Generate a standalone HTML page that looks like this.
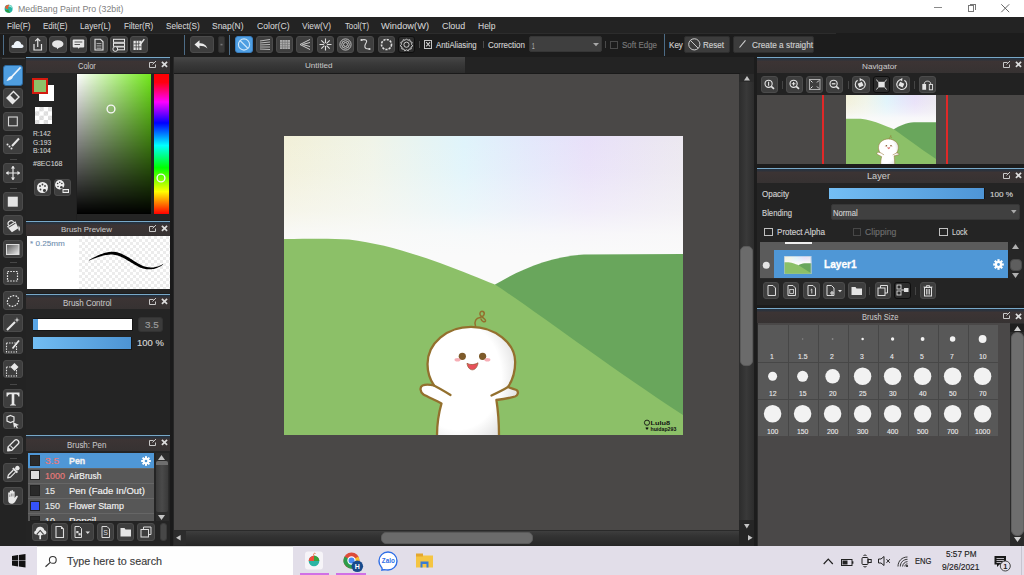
<!DOCTYPE html><html><head><meta charset="utf-8"><style>
*{margin:0;padding:0;box-sizing:border-box}
html,body{width:1024px;height:575px;overflow:hidden;background:#222;font-family:"Liberation Sans",sans-serif}
.a{position:absolute}
.t{position:absolute;white-space:nowrap;line-height:1}
svg{overflow:visible}
text{font-family:"Liberation Sans",sans-serif;white-space:pre}
</style></head><body><div class="a" style="left:0px;top:0px;width:1024px;height:17px;background:#fff"></div>
<svg class="a" style="left:3.5px;top:3.5px;" width="9" height="9" viewBox="0 0 9 9"><circle cx="4.6" cy="4.8" r="4" fill="#26b5a6"/><path d="M1 3.5 C1.5 1.2,3.5 0.5,5.5 0.9 C4.5 2,4 3.5,4.3 5 C3 5.2,1.8 4.8,1 3.5Z" fill="#e0603a"/><path d="M0.8 5.5 C1.5 6,3 6.2,4.3 5.5 C4.8 7,5.5 8,6.5 8.6 C4.5 9.3,1.8 8.2,0.8 5.5Z" fill="#2e9a40"/><path d="M5.5 0.9 C7.5 1.3,8.6 3,8.6 4.8 C7.5 3.2,6 2.3,4.4 2.8Z" fill="#9ee8d8"/></svg>
<svg class="a" style="left:13.50px;top:-0.32px;" width="113.5" height="16.9"><text x="4" y="12.32" font-size="9.40" fill="#808080" stroke="#808080" stroke-width="0" textLength="105.49" lengthAdjust="spacingAndGlyphs">MediBang Paint Pro (32bit)</text></svg>
<div class="a" style="left:933.5px;top:7px;width:8.5px;height:1px;background:#8a8a8a"></div>
<div class="a" style="left:967.5px;top:5px;width:6.5px;height:6.5px;border:1px solid #777"></div>
<div class="a" style="left:969.5px;top:3.5px;width:6px;height:6px;border-top:1px solid #777;border-right:1px solid #777"></div>
<svg class="a" style="left:1001px;top:3.5px;" width="8.5" height="8.5" viewBox="0 0 8.5 8.5"><path d="M0.3 0.3 L8.2 8.2 M8.2 0.3 L0.3 8.2" stroke="#666" stroke-width="1"/></svg>
<div class="a" style="left:0px;top:17px;width:1024px;height:16px;background:#232323"></div>
<svg class="a" style="left:2.50px;top:16.19px;" width="31.5" height="17.9"><text x="4" y="12.81" font-size="9.93" fill="#d4d4d4" stroke="#d4d4d4" stroke-width="0.08" textLength="23.51" lengthAdjust="spacingAndGlyphs">File(F)</text></svg>
<svg class="a" style="left:38.75px;top:16.19px;" width="32.5" height="17.9"><text x="4" y="12.81" font-size="9.93" fill="#d4d4d4" stroke="#d4d4d4" stroke-width="0.08" textLength="24.51" lengthAdjust="spacingAndGlyphs">Edit(E)</text></svg>
<svg class="a" style="left:75.75px;top:16.19px;" width="38.9" height="17.9"><text x="4" y="12.81" font-size="9.93" fill="#d4d4d4" stroke="#d4d4d4" stroke-width="0.08" textLength="30.86" lengthAdjust="spacingAndGlyphs">Layer(L)</text></svg>
<svg class="a" style="left:119.75px;top:16.19px;" width="37.3" height="17.9"><text x="4" y="12.81" font-size="9.93" fill="#d4d4d4" stroke="#d4d4d4" stroke-width="0.08" textLength="29.25" lengthAdjust="spacingAndGlyphs">Filter(R)</text></svg>
<svg class="a" style="left:161.50px;top:16.19px;" width="41.7" height="17.9"><text x="4" y="12.81" font-size="9.93" fill="#d4d4d4" stroke="#d4d4d4" stroke-width="0.08" textLength="33.75" lengthAdjust="spacingAndGlyphs">Select(S)</text></svg>
<svg class="a" style="left:207.50px;top:16.19px;" width="39.5" height="17.9"><text x="4" y="12.81" font-size="9.93" fill="#d4d4d4" stroke="#d4d4d4" stroke-width="0.08" textLength="31.51" lengthAdjust="spacingAndGlyphs">Snap(N)</text></svg>
<svg class="a" style="left:252.60px;top:16.19px;" width="40.5" height="17.9"><text x="4" y="12.81" font-size="9.93" fill="#d4d4d4" stroke="#d4d4d4" stroke-width="0.08" textLength="32.50" lengthAdjust="spacingAndGlyphs">Color(C)</text></svg>
<svg class="a" style="left:298.00px;top:16.19px;" width="37.0" height="17.9"><text x="4" y="12.81" font-size="9.93" fill="#d4d4d4" stroke="#d4d4d4" stroke-width="0.08" textLength="29.00" lengthAdjust="spacingAndGlyphs">View(V)</text></svg>
<svg class="a" style="left:341.00px;top:16.19px;" width="32.1" height="17.9"><text x="4" y="12.81" font-size="9.93" fill="#d4d4d4" stroke="#d4d4d4" stroke-width="0.08" textLength="24.09" lengthAdjust="spacingAndGlyphs">Tool(T)</text></svg>
<svg class="a" style="left:377.00px;top:16.19px;" width="56.0" height="17.9"><text x="4" y="12.81" font-size="9.93" fill="#d4d4d4" stroke="#d4d4d4" stroke-width="0.08" textLength="47.99" lengthAdjust="spacingAndGlyphs">Window(W)</text></svg>
<svg class="a" style="left:438.10px;top:16.19px;" width="31.2" height="17.9"><text x="4" y="12.81" font-size="9.93" fill="#d4d4d4" stroke="#d4d4d4" stroke-width="0.08" textLength="23.15" lengthAdjust="spacingAndGlyphs">Cloud</text></svg>
<svg class="a" style="left:474.40px;top:16.19px;" width="25.5" height="17.9"><text x="4" y="12.81" font-size="9.93" fill="#d4d4d4" stroke="#d4d4d4" stroke-width="0.08" textLength="17.49" lengthAdjust="spacingAndGlyphs">Help</text></svg>
<div class="a" style="left:0px;top:33px;width:1024px;height:24px;background:#1c1c1c"></div>
<div class="a" style="left:0px;top:33px;width:836px;height:1px;background:#2c2c2c"></div>
<div class="a" style="left:2.5px;top:35px;width:1px;height:20px;background:#4d6c86"></div>
<div class="a" style="left:184px;top:35px;width:1px;height:20px;background:#4d6c86"></div>
<div class="a" style="left:228.5px;top:35px;width:1px;height:20px;background:#4d6c86"></div>
<div class="a" style="left:664px;top:33.5px;width:1.2px;height:22px;background:#4d6c86"></div>
<div class="a" style="left:9px;top:36px;width:17.5px;height:17px;background:#3e3e3e;border:1px solid #4b4b4b;border-radius:3px;"></div>
<svg class="a" style="left:9px;top:36px;" width="17.5" height="17" viewBox="0 0 17.5 17"><path d="M4.5 12 C2.5 12,2 10.5,2.8 9.5 C3.3 8.8,4.3 8.6,4.8 8.8 C5 6.8,6.5 5,8.5 5 C10.5 5,12 6.5,12.2 8.3 C13.5 8.3,14.5 9.2,14.5 10.3 C14.5 11.3,13.7 12,12.6 12Z" fill="#eef4fa"/></svg>
<div class="a" style="left:29px;top:36px;width:17.5px;height:17px;background:#3e3e3e;border:1px solid #4b4b4b;border-radius:3px;"></div>
<svg class="a" style="left:29px;top:36px;" width="17.5" height="17" viewBox="0 0 17.5 17"><path d="M5 8 L5 14 L12.5 14 L12.5 8" fill="none" stroke="#e6e6e6" stroke-width="1.2"/><path d="M8.75 11 L8.75 2.8 M6.3 5.2 L8.75 2.7 L11.2 5.2" fill="none" stroke="#e6e6e6" stroke-width="1.2"/></svg>
<div class="a" style="left:49px;top:36px;width:17.5px;height:17px;background:#3e3e3e;border:1px solid #4b4b4b;border-radius:3px;"></div>
<svg class="a" style="left:49px;top:36px;" width="17.5" height="17" viewBox="0 0 17.5 17"><ellipse cx="8.75" cy="8" rx="5.7" ry="3.8" fill="#e6e6e6"/><path d="M7.5 11 L8.3 13.2 L10.5 11Z" fill="#e6e6e6"/></svg>
<div class="a" style="left:69.5px;top:36px;width:17.5px;height:17px;background:#3e3e3e;border:1px solid #4b4b4b;border-radius:3px;"></div>
<svg class="a" style="left:69.5px;top:36px;" width="17.5" height="17" viewBox="0 0 17.5 17"><rect x="2.7" y="3.5" width="11.5" height="8" rx="1" fill="#e6e6e6"/><path d="M7.8 11 L8.7 13 L9.7 11Z" fill="#e6e6e6"/><path d="M4.5 6 H12.3 M4.5 8.5 H10" stroke="#555" stroke-width="1"/></svg>
<div class="a" style="left:90px;top:36px;width:17.5px;height:17px;background:#3e3e3e;border:1px solid #4b4b4b;border-radius:3px;"></div>
<svg class="a" style="left:90px;top:36px;" width="17.5" height="17" viewBox="0 0 17.5 17"><path d="M5 3.3 L10.5 3.3 L13 5.8 L13 14 L5 14Z" fill="none" stroke="#e6e6e6" stroke-width="1.1"/><path d="M6.6 7.6 H11.4 M6.6 9.9 H11.4 M6.6 12.2 H11.4" stroke="#d8d8d8" stroke-width="0.75"/></svg>
<div class="a" style="left:110px;top:36px;width:17.5px;height:17px;background:#3e3e3e;border:1px solid #4b4b4b;border-radius:3px;"></div>
<svg class="a" style="left:110px;top:36px;" width="17.5" height="17" viewBox="0 0 17.5 17"><rect x="3.5" y="3.3" width="11" height="3" fill="none" stroke="#e6e6e6" stroke-width="1"/><rect x="3.5" y="7.3" width="11" height="3" fill="none" stroke="#e6e6e6" stroke-width="1"/><rect x="6.5" y="11" width="8" height="2.8" fill="none" stroke="#e6e6e6" stroke-width="1"/><circle cx="5.3" cy="13" r="2.4" fill="#3d3d3d" stroke="#e6e6e6" stroke-width="1"/></svg>
<div class="a" style="left:130px;top:36px;width:17.5px;height:17px;background:#3e3e3e;border:1px solid #4b4b4b;border-radius:3px;"></div>
<svg class="a" style="left:130px;top:36px;" width="17.5" height="17" viewBox="0 0 17.5 17"><rect x="3.5" y="4.8" width="8" height="9.2" fill="#e6e6e6"/><path d="M3.5 7.9 H11.5 M3.5 10.9 H11.5 M6.2 4.8 V14 M8.8 4.8 V14" stroke="#3e3e3e" stroke-width="0.8"/><path d="M9.5 9.5 L14.3 3.2" stroke="#e6e6e6" stroke-width="1.4"/></svg>
<div class="a" style="left:190.3px;top:36px;width:23.7px;height:17px;background:#3e3e3e;border:1px solid #4b4b4b;border-radius:3px;"></div>
<svg class="a" style="left:190.3px;top:36px;" width="23.7" height="17" viewBox="0 0 23.7 17"><path d="M17.5 12.5 C16 8.5,13 7.2,9.5 7.2 L9.5 4.3 L4.5 8.5 L9.5 12.7 L9.5 9.8 C12.5 9.8,15.5 10.5,17.5 12.5Z" fill="#ececec"/></svg>
<div class="a" style="left:217.5px;top:36px;width:7px;height:17px;background:#3a3a3a;border:1px solid #2e2e2e;border-radius:2px;"></div>
<svg class="a" style="left:217.5px;top:36px;" width="7" height="17" viewBox="0 0 7 17"><rect x="2.5" y="7.8" width="2" height="1.6" fill="#777"/></svg>
<div class="a" style="left:235.3px;top:36px;width:18px;height:17px;background:#4e9ee2;border:1px solid #3b7fc0;border-radius:3px;"></div>
<svg class="a" style="left:235.3px;top:36px;" width="18" height="17" viewBox="0 0 18 17"><circle cx="9" cy="8.5" r="5.6" fill="none" stroke="#cfe6fa" stroke-width="1.1"/><path d="M5 4.5 L13 12.5" stroke="#cfe6fa" stroke-width="1.1"/></svg>
<div class="a" style="left:256px;top:36px;width:17px;height:17px;background:#3e3e3e;border:1px solid #4b4b4b;border-radius:3px;"></div>
<svg class="a" style="left:256px;top:36px;" width="17" height="17" viewBox="0 0 17 17"><path d="M4 5 L14 3.5 M4 7 L14 6 M4 9 L14 8.5 M4 11 L14 11 M4 13 L14 13.5" stroke="#bbb" stroke-width="1"/></svg>
<div class="a" style="left:276px;top:36px;width:17px;height:17px;background:#3e3e3e;border:1px solid #4b4b4b;border-radius:3px;"></div>
<svg class="a" style="left:276px;top:36px;" width="17" height="17" viewBox="0 0 17 17"><rect x="4" y="4" width="10" height="9" fill="#aaa"/><path d="M4 6.3 H14 M4 8.6 H14 M4 10.9 H14 M6.5 4 V13 M9 4 V13 M11.5 4 V13" stroke="#777" stroke-width="0.7"/></svg>
<div class="a" style="left:296px;top:36px;width:17px;height:17px;background:#3e3e3e;border:1px solid #4b4b4b;border-radius:3px;"></div>
<svg class="a" style="left:296px;top:36px;" width="17" height="17" viewBox="0 0 17 17"><path d="M14 3.5 L4 8.5 L14 13.5 M14 6.5 L6.5 8.5 L14 10.5" fill="none" stroke="#ccc" stroke-width="1"/></svg>
<div class="a" style="left:317px;top:36px;width:17px;height:17px;background:#3e3e3e;border:1px solid #4b4b4b;border-radius:3px;"></div>
<svg class="a" style="left:317px;top:36px;" width="17" height="17" viewBox="0 0 17 17"><path d="M8.5 2.5 V14.5 M2.5 8.5 H14.5 M4.3 4.3 L12.7 12.7 M12.7 4.3 L4.3 12.7" stroke="#ddd" stroke-width="1.1"/><circle cx="8.5" cy="8.5" r="1.6" fill="#3e3e3e"/></svg>
<div class="a" style="left:337px;top:36px;width:17px;height:17px;background:#3e3e3e;border:1px solid #4b4b4b;border-radius:3px;"></div>
<svg class="a" style="left:337px;top:36px;" width="17" height="17" viewBox="0 0 17 17"><circle cx="8.5" cy="8.5" r="5.6" fill="none" stroke="#ccc" stroke-width="0.9"/><circle cx="8.5" cy="8.5" r="3.8" fill="none" stroke="#ccc" stroke-width="0.9"/><circle cx="8.5" cy="8.5" r="2" fill="none" stroke="#ccc" stroke-width="0.9"/></svg>
<div class="a" style="left:357px;top:36px;width:17px;height:17px;background:#3e3e3e;border:1px solid #4b4b4b;border-radius:3px;"></div>
<svg class="a" style="left:357px;top:36px;" width="17" height="17" viewBox="0 0 17 17"><path d="M4.5 4 C8 3,11 4,9 7 C7 10,7 13,12 13" fill="none" stroke="#ddd" stroke-width="1.1"/><circle cx="4.5" cy="4" r="1.1" fill="#ddd"/><circle cx="12.5" cy="13" r="1.1" fill="#ddd"/></svg>
<div class="a" style="left:377.5px;top:36px;width:17px;height:17px;background:#3e3e3e;border:1px solid #4b4b4b;border-radius:3px;"></div>
<svg class="a" style="left:377.5px;top:36px;" width="17" height="17" viewBox="0 0 17 17"><circle cx="8.5" cy="8.5" r="5" fill="none" stroke="#e0e0e0" stroke-width="1.6" stroke-dasharray="2.2 1.1"/></svg>
<div class="a" style="left:397.5px;top:36px;width:17px;height:17px;background:#2c2c2c;border:1px solid #0f0f0f;border-radius:3px;"></div>
<svg class="a" style="left:397.5px;top:36px;" width="17" height="17" viewBox="0 0 17 17"><path d="M8.5 2.8 L9.8 4.3 L11.8 3.7 L12.2 5.7 L14.2 6.3 L13.5 8.3 L14.8 9.9 L13 11 L13.2 13 L11.2 13 L10.3 14.8 L8.5 13.8 L6.7 14.8 L5.8 13 L3.8 13 L4 11 L2.2 9.9 L3.5 8.3 L2.8 6.3 L4.8 5.7 L5.2 3.7 L7.2 4.3Z" fill="none" stroke="#ccc" stroke-width="1"/><circle cx="8.5" cy="8.7" r="2.6" fill="none" stroke="#ccc" stroke-width="1"/></svg>
<div class="a" style="left:418.5px;top:41px;width:1px;height:7px;background:#4a4a4a"></div>
<div class="a" style="left:423.75px;top:40.25px;width:8.2px;height:8.5px;border:1px solid #c4c4c4"></div>
<svg class="a" style="left:423.75px;top:40.25px;" width="8.2" height="8.5" viewBox="0 0 8.2 8.5"><path d="M2.2 2.2 L6 6.3 M6 2.2 L2.2 6.3" stroke="#d0d0d0" stroke-width="1.1"/></svg>
<svg class="a" style="left:432.25px;top:35.97px;" width="48.7" height="16.3"><text x="4" y="12.03" font-size="9.06" fill="#cfcfcf" stroke="#cfcfcf" stroke-width="0.15" textLength="40.65" lengthAdjust="spacingAndGlyphs">AntiAliasing</text></svg>
<div class="a" style="left:482.5px;top:41px;width:1px;height:7px;background:#4a4a4a"></div>
<svg class="a" style="left:484.10px;top:36.45px;" width="44.9" height="15.7"><text x="4" y="11.55" font-size="8.70" fill="#cfcfcf" stroke="#cfcfcf" stroke-width="0.15" textLength="36.90" lengthAdjust="spacingAndGlyphs">Correction</text></svg>
<div class="a" style="left:528.75px;top:36.25px;width:73px;height:15.9px;background:#3f3f3f;border:1px solid #363636;border-radius:2px;"></div>
<svg class="a" style="left:528.20px;top:36.50px;" width="10.6" height="15.7"><text x="4" y="11.50" font-size="8.70" fill="#b0b0b0" stroke="#b0b0b0" stroke-width="0.15" textLength="2.56" lengthAdjust="spacingAndGlyphs">1</text></svg>
<svg class="a" style="left:593px;top:43px;" width="6" height="3.3" viewBox="0 0 6 3.3"><path d="M0 0 L6 0 L3 3.3Z" fill="#a8a8a8"/></svg>
<div class="a" style="left:604.9px;top:41px;width:1px;height:7px;background:#4a4a4a"></div>
<div class="a" style="left:610.1px;top:40.9px;width:7.7px;height:7.9px;border:1px solid #4a4a4a"></div>
<svg class="a" style="left:618.40px;top:36.45px;" width="43.0" height="15.7"><text x="4" y="11.55" font-size="8.70" fill="#7a7a7a" stroke="#7a7a7a" stroke-width="0.15" textLength="35.00" lengthAdjust="spacingAndGlyphs">Soft Edge</text></svg>
<svg class="a" style="left:664.60px;top:36.04px;" width="21.9" height="16.7"><text x="4" y="11.96" font-size="9.28" fill="#cfcfcf" stroke="#cfcfcf" stroke-width="0.15" textLength="13.91" lengthAdjust="spacingAndGlyphs">Key</text></svg>
<div class="a" style="left:684.2px;top:36.1px;width:45.7px;height:16.5px;background:#3c3c3c;border:1px solid #2e2e2e;border-radius:2px;"></div>
<svg class="a" style="left:688.4px;top:37.5px;" width="12.6" height="12.7" viewBox="0 0 12.6 12.7"><circle cx="6.3" cy="6.35" r="5.6" fill="none" stroke="#cfcfcf" stroke-width="1"/><path d="M2.4 2.4 L10.2 10.3" stroke="#cfcfcf" stroke-width="1"/></svg>
<svg class="a" style="left:699.40px;top:36.04px;" width="29.1" height="16.7"><text x="4" y="11.96" font-size="9.28" fill="#d0d0d0" stroke="#d0d0d0" stroke-width="0.15" textLength="21.10" lengthAdjust="spacingAndGlyphs">Reset</text></svg>
<div class="a" style="left:733px;top:36.1px;width:80.8px;height:16.5px;background:#3c3c3c;border:1px solid #2e2e2e;border-radius:2px;"></div>
<svg class="a" style="left:739.3px;top:40.3px;" width="7" height="7.8" viewBox="0 0 7 7.8"><path d="M0.5 7.5 L6.5 0.3" stroke="#d0d0d0" stroke-width="1.1"/></svg>
<svg class="a" style="left:748.00px;top:36.04px;" width="69.1" height="16.7"><text x="4" y="11.96" font-size="9.28" fill="#d0d0d0" stroke="#d0d0d0" stroke-width="0.15" textLength="61.10" lengthAdjust="spacingAndGlyphs">Create a straight</text></svg>
<div class="a" style="left:0px;top:57px;width:26px;height:489px;background:#232323"></div>
<div class="a" style="left:1.5px;top:57.5px;width:23px;height:1px;background:#3c3c3c"></div>
<div class="a" style="left:3.1px;top:64.9px;width:20px;height:20.89999999999999px;background:#4f9ee0;border:1px solid #2c6aa0;border-radius:3px;"></div>
<svg class="a" style="left:3.1px;top:64.9px;" width="20" height="20.89999999999999" viewBox="0 0 20 20.89999999999999"><path d="M17 3 L8.5 12" stroke="#f0f6fc" stroke-width="1.8" stroke-linecap="round"/><path d="M8.6 11 C6 11.2,5 13,3.5 16 C6.5 15.5,9 14.5,9.8 12.2Z" fill="#f0f6fc"/></svg>
<div class="a" style="left:3.1px;top:88px;width:20px;height:20px;background:#3e3e3e;border:1px solid #4b4b4b;border-radius:3px;"></div>
<svg class="a" style="left:3.1px;top:88px;" width="20" height="20" viewBox="0 0 20 20"><path d="M10.5 3.5 L16 9 L9.5 15.5 L4 10Z" fill="none" stroke="#e8e8e8" stroke-width="1.4"/><path d="M4 10 L7 7 L12.5 12.5 L9.5 15.5Z" fill="#e8e8e8"/></svg>
<div class="a" style="left:3.1px;top:112px;width:20px;height:19px;background:#3e3e3e;border:1px solid #4b4b4b;border-radius:3px;"></div>
<svg class="a" style="left:3.1px;top:112px;" width="20" height="19" viewBox="0 0 20 19"><rect x="5.5" y="5" width="8.8" height="8.8" fill="none" stroke="#d8d8d8" stroke-width="1.1"/></svg>
<div class="a" style="left:3.1px;top:135.3px;width:20px;height:19.19999999999999px;background:#3e3e3e;border:1px solid #4b4b4b;border-radius:3px;"></div>
<svg class="a" style="left:3.1px;top:135.3px;" width="20" height="19.19999999999999" viewBox="0 0 20 19.19999999999999"><path d="M16 3.5 L9 11" stroke="#e8e8e8" stroke-width="2"/><circle cx="4.5" cy="9.5" r="1" fill="#e8e8e8"/><circle cx="6.5" cy="11.5" r="1" fill="#e8e8e8"/><circle cx="8.5" cy="13.5" r="1" fill="#e8e8e8"/></svg>
<div class="a" style="left:3.1px;top:163px;width:20px;height:20.400000000000006px;background:#3e3e3e;border:1px solid #4b4b4b;border-radius:3px;"></div>
<svg class="a" style="left:3.1px;top:163px;" width="20" height="20.400000000000006" viewBox="0 0 20 20.400000000000006"><path d="M10 3 V17 M3 10 H17" stroke="#e8e8e8" stroke-width="1.2"/><path d="M7.8 5.5 L10 3 L12.2 5.5Z M7.8 14.5 L10 17 L12.2 14.5Z M5.5 7.8 L3 10 L5.5 12.2Z M14.5 7.8 L17 10 L14.5 12.2Z" fill="#e8e8e8"/></svg>
<div class="a" style="left:3.1px;top:192px;width:20px;height:19.400000000000006px;background:#3e3e3e;border:1px solid #4b4b4b;border-radius:3px;"></div>
<svg class="a" style="left:3.1px;top:192px;" width="20" height="19.400000000000006" viewBox="0 0 20 19.400000000000006"><rect x="4.8" y="4.7" width="10" height="10" fill="#e4e4e4"/></svg>
<div class="a" style="left:3.1px;top:215.3px;width:20px;height:19.899999999999977px;background:#3e3e3e;border:1px solid #4b4b4b;border-radius:3px;"></div>
<svg class="a" style="left:3.1px;top:215.3px;" width="20" height="19.899999999999977" viewBox="0 0 20 19.899999999999977"><g transform="rotate(-32 9.5 11)"><path d="M4.5 8.5 L14.5 8.5 L13.3 16 L5.7 16Z" fill="#e8e8e8"/><path d="M6.5 8.5 C6.5 4.3, 12.5 4.3, 12.5 8.5" fill="none" stroke="#e8e8e8" stroke-width="1.2"/><path d="M5.5 10 H13.5" stroke="#3e3e3e" stroke-width="0.9"/></g><path d="M15.8 10.5 C17.3 12.3, 17.3 14.8, 16.2 16.3 C15.1 14.8, 15 12.5, 15.8 10.5Z" fill="#e8e8e8"/></svg>
<div class="a" style="left:3.1px;top:240.3px;width:20px;height:17.80000000000001px;background:#3e3e3e;border:1px solid #4b4b4b;border-radius:3px;"></div>
<svg class="a" style="left:3.1px;top:240.3px;" width="20" height="17.80000000000001" viewBox="0 0 20 17.80000000000001"><rect x="3.5" y="4.5" width="12.5" height="10" fill="url(#gradic)" stroke="#ddd" stroke-width="1"/><defs><linearGradient id="gradic" x1="0" y1="0" x2="1" y2="1"><stop offset="0" stop-color="#555"/><stop offset="1" stop-color="#eee"/></linearGradient></defs></svg>
<div class="a" style="left:3.1px;top:267px;width:20px;height:17.69999999999999px;background:#3e3e3e;border:1px solid #4b4b4b;border-radius:3px;"></div>
<svg class="a" style="left:3.1px;top:267px;" width="20" height="17.69999999999999" viewBox="0 0 20 17.69999999999999"><rect x="4.5" y="4.5" width="10" height="9.5" fill="none" stroke="#e8e8e8" stroke-width="1.2" stroke-dasharray="1.6 1.2"/></svg>
<div class="a" style="left:3.1px;top:290.6px;width:20px;height:19.19999999999999px;background:#3e3e3e;border:1px solid #4b4b4b;border-radius:3px;"></div>
<svg class="a" style="left:3.1px;top:290.6px;" width="20" height="19.19999999999999" viewBox="0 0 20 19.19999999999999"><ellipse cx="10" cy="10" rx="6" ry="5" transform="rotate(-35 10 10)" fill="none" stroke="#e8e8e8" stroke-width="1.2" stroke-dasharray="1.6 1.2"/></svg>
<div class="a" style="left:3.1px;top:314.3px;width:20px;height:17.69999999999999px;background:#3e3e3e;border:1px solid #4b4b4b;border-radius:3px;"></div>
<svg class="a" style="left:3.1px;top:314.3px;" width="20" height="17.69999999999999" viewBox="0 0 20 17.69999999999999"><path d="M4 16 L12 8" stroke="#e8e8e8" stroke-width="2.2"/><path d="M14 3 L14.6 5.4 L17 6 L14.6 6.6 L14 9 L13.4 6.6 L11 6 L13.4 5.4Z" fill="#e8e8e8"/></svg>
<div class="a" style="left:3.1px;top:336.5px;width:20px;height:17.69999999999999px;background:#3e3e3e;border:1px solid #4b4b4b;border-radius:3px;"></div>
<svg class="a" style="left:3.1px;top:336.5px;" width="20" height="17.69999999999999" viewBox="0 0 20 17.69999999999999"><rect x="3.5" y="6" width="10" height="9" fill="none" stroke="#e8e8e8" stroke-width="1.1" stroke-dasharray="1.4 1.2"/><path d="M16 3.5 L9.5 11.5" stroke="#e8e8e8" stroke-width="1.8"/></svg>
<div class="a" style="left:3.1px;top:360px;width:20px;height:17.80000000000001px;background:#3e3e3e;border:1px solid #4b4b4b;border-radius:3px;"></div>
<svg class="a" style="left:3.1px;top:360px;" width="20" height="17.80000000000001" viewBox="0 0 20 17.80000000000001"><rect x="3.5" y="7" width="10" height="9" fill="none" stroke="#e8e8e8" stroke-width="1.1" stroke-dasharray="1.4 1.2"/><path d="M11.5 3 L15.5 7 L11.5 11 L7.5 7Z" fill="#e8e8e8"/></svg>
<div class="a" style="left:3.1px;top:389px;width:20px;height:19px;background:#3e3e3e;border:1px solid #4b4b4b;border-radius:3px;"></div>
<svg class="a" style="left:3.1px;top:389px;" width="20" height="19" viewBox="0 0 20 19"><path d="M3.5 3.5 H16.5 V7.5 H15.3 C15 5.5,14 5.2,12 5.2 H11.3 V14.5 C11.3 15.5,12 15.7,13 15.8 V16.5 H7 V15.8 C8 15.7,8.7 15.5,8.7 14.5 V5.2 H8 C6 5.2,5 5.5,4.7 7.5 H3.5Z" fill="#e8e8e8"/></svg>
<div class="a" style="left:3.1px;top:412.3px;width:20px;height:16.69999999999999px;background:#3e3e3e;border:1px solid #4b4b4b;border-radius:3px;"></div>
<svg class="a" style="left:3.1px;top:412.3px;" width="20" height="16.69999999999999" viewBox="0 0 20 16.69999999999999"><path d="M7.5 3.5 L11 5 L11 9 L7.5 10.5 L4 9 L4 5Z" fill="none" stroke="#e8e8e8" stroke-width="1.2"/><path d="M10 10 L16 13 L13.5 13.8 L15 16 L13.8 16.6 L12.5 14.3 L11 16Z" fill="#e8e8e8"/></svg>
<div class="a" style="left:3.1px;top:436px;width:20px;height:18px;background:#3e3e3e;border:1px solid #4b4b4b;border-radius:3px;"></div>
<svg class="a" style="left:3.1px;top:436px;" width="20" height="18" viewBox="0 0 20 18"><g transform="rotate(-45 10 9.5)"><path d="M5.5 7 H15 C16.5 7,17 8.2,17 9.5 C17 10.8,16.5 12,15 12 H5.5 L2.5 9.5Z" fill="none" stroke="#e8e8e8" stroke-width="1.3" stroke-linejoin="round"/><path d="M2.5 9.5 L5.5 7.2 L5.5 11.8Z" fill="#e8e8e8"/><path d="M8 7.5 V11.5" stroke="#e8e8e8" stroke-width="1"/></g></svg>
<div class="a" style="left:3.1px;top:463px;width:20px;height:18.80000000000001px;background:#3e3e3e;border:1px solid #4b4b4b;border-radius:3px;"></div>
<svg class="a" style="left:3.1px;top:463px;" width="20" height="18.80000000000001" viewBox="0 0 20 18.80000000000001"><g transform="rotate(45 10 9.5)"><circle cx="10" cy="3.3" r="2.3" fill="#e8e8e8"/><rect x="6.8" y="5.5" width="6.4" height="2" fill="#e8e8e8"/><path d="M8.5 7.5 V14.5 L10 17 L11.5 14.5 V7.5" fill="none" stroke="#e8e8e8" stroke-width="1.2" stroke-linejoin="round"/></g></svg>
<div class="a" style="left:3.1px;top:486.8px;width:20px;height:18.69999999999999px;background:#3e3e3e;border:1px solid #4b4b4b;border-radius:3px;"></div>
<svg class="a" style="left:3.1px;top:486.8px;" width="20" height="18.69999999999999" viewBox="0 0 20 18.69999999999999"><path d="M5.2 11.5 V6 C5.2 5,6.8 5,6.8 6 V9.8 V4.5 C6.8 3.5,8.4 3.5,8.4 4.5 V9.5 V3.8 C8.4 2.8,10 2.8,10 3.8 V9.5 V5 C10 4,11.6 4,11.6 5 V11 L13 9.2 C13.8 8.3,15.3 8.9,14.7 10 L12.3 14.5 C11.3 16.2,10 16.8,8.5 16.8 C6.5 16.8,5.2 15.3,5.2 13.3Z" fill="#e8e8e8"/><path d="M6.8 10 V7.5 M8.4 9.5 V6.5 M10 9.5 V6.5" stroke="#3e3e3e" stroke-width="0.5"/></svg>
<div class="a" style="left:10px;top:159.4px;width:7px;height:1px;background:#474747"></div>
<div class="a" style="left:10px;top:187.7px;width:7px;height:1px;background:#474747"></div>
<div class="a" style="left:10px;top:262px;width:7px;height:1px;background:#474747"></div>
<div class="a" style="left:10px;top:383.8px;width:7px;height:1px;background:#474747"></div>
<div class="a" style="left:10px;top:458.2px;width:7px;height:1px;background:#474747"></div>
<div class="a" style="left:26px;top:57px;width:147px;height:489px;background:#1c1c1c"></div>
<div class="a" style="left:170px;top:57px;width:3.5px;height:489px;background:#1a1a1a"></div>
<div class="a" style="left:26px;top:57px;width:144px;height:15.5px;background:linear-gradient(#253240 0px,#253240 1.5px,#3c3434 4.5px,#363232 100%)"></div>
<div class="a" style="left:26px;top:57px;width:144px;height:1px;background:#78a8c8"></div>
<svg class="a" style="left:73.75px;top:58.08px;" width="25.8" height="15.3"><text x="4" y="10.92" font-size="8.48" fill="#c8c8c8" stroke="#c8c8c8" stroke-width="0.05" textLength="17.85" lengthAdjust="spacingAndGlyphs">Color</text></svg>
<svg class="a" style="left:148.5px;top:61px;" width="8" height="7" viewBox="0 0 8 7"><path d="M4.5 1.5 L0.5 1.5 L0.5 6.5 L6.5 6.5 L6.5 3.5" fill="none" stroke="#c8c8c8" stroke-width="1"/><path d="M3.5 3.5 L7 0" stroke="#c8c8c8" stroke-width="1"/></svg>
<svg class="a" style="left:160.5px;top:61.3px;" width="7" height="6.7" viewBox="0 0 7 6.7"><path d="M0.9 0.9 L6.1 5.8 M6.1 0.9 L0.9 5.8" stroke="#dcdcdc" stroke-width="1.7"/></svg>
<div class="a" style="left:26px;top:72.5px;width:144px;height:147px;background:#242424"></div>
<div class="a" style="left:75.5px;top:72.5px;width:1px;height:147px;background:#202020"></div>
<div class="a" style="left:39.1px;top:85.4px;width:15.3px;height:15.6px;background:#fff"></div>
<div class="a" style="left:32px;top:78.2px;width:15.8px;height:15.6px;background:#8ec168;border:2px solid #d41a0e"></div>
<div class="a" style="left:34.9px;top:106.8px;width:17.4px;height:16.9px;background-color:#fff;background-image:linear-gradient(45deg,#dcdcdc 25%,transparent 25%,transparent 75%,#dcdcdc 75%),linear-gradient(45deg,#dcdcdc 25%,transparent 25%,transparent 75%,#dcdcdc 75%);background-size:8.7px 8.7px;background-position:0 0,4.35px 4.35px"></div>
<svg class="a" style="left:28.70px;top:127.07px;" width="25.7" height="12.8"><text x="4" y="8.93" font-size="7.10" fill="#d0d0d0" stroke="#d0d0d0" stroke-width="0.1" textLength="17.66" lengthAdjust="spacingAndGlyphs">R:142</text></svg>
<svg class="a" style="left:28.70px;top:134.66px;" width="26.2" height="14.0"><text x="4" y="10.34" font-size="7.77" fill="#d0d0d0" stroke="#d0d0d0" stroke-width="0.1" textLength="18.19" lengthAdjust="spacingAndGlyphs">G:193</text></svg>
<svg class="a" style="left:28.70px;top:143.38px;" width="25.7" height="13.0"><text x="4" y="9.62" font-size="7.25" fill="#d0d0d0" stroke="#d0d0d0" stroke-width="0.1" textLength="17.66" lengthAdjust="spacingAndGlyphs">B:104</text></svg>
<svg class="a" style="left:28.70px;top:156.78px;" width="37.4" height="13.0"><text x="4" y="9.22" font-size="7.25" fill="#d0d0d0" stroke="#d0d0d0" stroke-width="0.1" textLength="29.40" lengthAdjust="spacingAndGlyphs">#8EC168</text></svg>
<div class="a" style="left:34.1px;top:179.1px;width:16.8px;height:17.1px;background:#3e3e3e;border:1px solid #4b4b4b;border-radius:3px;"></div>
<svg class="a" style="left:34.1px;top:179.1px;" width="16.8" height="17.1" viewBox="0 0 16.8 17.1"><circle cx="8.5" cy="8.5" r="5.5" fill="#eee"/><circle cx="6" cy="7" r="0.9" fill="#3a3a3a"/><circle cx="8.5" cy="5.5" r="0.9" fill="#3a3a3a"/><circle cx="11" cy="7" r="0.9" fill="#3a3a3a"/><circle cx="6.5" cy="10.5" r="0.9" fill="#3a3a3a"/><circle cx="10.5" cy="11.5" r="1.5" fill="#3a3a3a"/></svg>
<div class="a" style="left:54.2px;top:179.1px;width:17.1px;height:17.1px;background:#3e3e3e;border:1px solid #4b4b4b;border-radius:3px;"></div>
<svg class="a" style="left:54.2px;top:179.1px;" width="17.1" height="17.1" viewBox="0 0 17.1 17.1"><g transform="translate(-1.5,-1.5) scale(0.85)"><circle cx="8.5" cy="8.5" r="5.5" fill="#eee"/><circle cx="6" cy="7" r="0.9" fill="#3b3b3b"/><circle cx="8.5" cy="5.5" r="0.9" fill="#3b3b3b"/><circle cx="11" cy="7" r="0.9" fill="#3b3b3b"/><circle cx="6.5" cy="10.5" r="0.9" fill="#3b3b3b"/><circle cx="10.5" cy="11.5" r="1.5" fill="#3b3b3b"/></g><rect x="8.5" y="10" width="6.5" height="4" fill="#eee"/><rect x="9.5" y="11" width="4.5" height="2" fill="#666"/></svg>
<div class="a" style="left:76.9px;top:74.1px;width:74.1px;height:140.4px;background:linear-gradient(to top,#000 0%,rgba(0,0,0,0) 100%),linear-gradient(to right,#fff,#72e81c)"></div>
<svg class="a" style="left:106.1px;top:103.8px;" width="10" height="10" viewBox="0 0 10 10"><circle cx="5" cy="5" r="3.9" fill="none" stroke="#f6f6f6" stroke-width="1.4"/></svg>
<div class="a" style="left:153.7px;top:74.1px;width:15.3px;height:140.4px;background:linear-gradient(#ff0000 0%,#ff0010 6%,#ff00ff 20%,#0000ff 35%,#00ffff 51%,#00ff00 67%,#ffff00 84%,#ff0000 100%)"></div>
<svg class="a" style="left:156.1px;top:172.8px;" width="10" height="10" viewBox="0 0 10 10"><circle cx="5" cy="5" r="3.9" fill="none" stroke="#f6f6f6" stroke-width="1.4"/></svg>
<div class="a" style="left:26px;top:220.5px;width:144px;height:15.5px;background:linear-gradient(#253240 0px,#253240 1.5px,#3c3434 4.5px,#363232 100%)"></div>
<div class="a" style="left:26px;top:220.5px;width:144px;height:1px;background:#78a8c8"></div>
<svg class="a" style="left:56.90px;top:221.84px;" width="58.8" height="14.3"><text x="4" y="10.16" font-size="7.97" fill="#c8c8c8" stroke="#c8c8c8" stroke-width="0.05" textLength="50.83" lengthAdjust="spacingAndGlyphs">Brush Preview</text></svg>
<svg class="a" style="left:148.5px;top:224.5px;" width="8" height="7" viewBox="0 0 8 7"><path d="M4.5 1.5 L0.5 1.5 L0.5 6.5 L6.5 6.5 L6.5 3.5" fill="none" stroke="#c8c8c8" stroke-width="1"/><path d="M3.5 3.5 L7 0" stroke="#c8c8c8" stroke-width="1"/></svg>
<svg class="a" style="left:160.5px;top:224.8px;" width="7" height="6.7" viewBox="0 0 7 6.7"><path d="M0.9 0.9 L6.1 5.8 M6.1 0.9 L0.9 5.8" stroke="#dcdcdc" stroke-width="1.7"/></svg>
<div class="a" style="left:26px;top:235.5px;width:144px;height:57px;background:#242424"></div>
<div class="a" style="left:26.9px;top:236.05px;width:52.5px;height:53.4px;background:#fff"></div>
<div class="a" style="left:79.4px;top:236.05px;width:90.6px;height:53.4px;background-color:#ffffff;background-image:linear-gradient(45deg,#ececec 25%,transparent 25%,transparent 75%,#ececec 75%),linear-gradient(45deg,#ececec 25%,transparent 25%,transparent 75%,#ececec 75%);background-size:6px 6px;background-position:0 0,3px 3px"></div>
<svg class="a" style="left:25.75px;top:236.10px;" width="42.8" height="13.6"><text x="4" y="9.90" font-size="7.54" fill="#6f8fb0" stroke="#6f8fb0" stroke-width="0.1" textLength="34.85" lengthAdjust="spacingAndGlyphs">* 0.25mm</text></svg>
<svg class="a" style="left:79.4px;top:236px;" width="91" height="54" viewBox="0 0 91 54"><polygon points="10.11,24.53 11.35,24.05 12.58,23.57 13.81,23.09 15.03,22.62 16.25,22.17 17.47,21.73 18.67,21.31 19.87,20.91 21.07,20.53 22.25,20.18 23.42,19.86 24.59,19.57 25.74,19.31 26.88,19.09 28.01,18.90 29.13,18.75 30.23,18.65 31.32,18.59 32.40,18.57 33.45,18.60 34.78,18.71 36.09,18.91 37.40,19.21 38.71,19.59 40.04,20.05 41.37,20.59 42.72,21.20 44.08,21.86 45.44,22.58 46.82,23.35 48.22,24.15 49.62,24.98 51.04,25.82 52.48,26.69 53.93,27.55 55.39,28.41 56.87,29.26 58.37,30.09 59.89,30.88 61.48,31.66 62.80,32.10 64.03,32.45 65.25,32.74 66.46,32.97 67.66,33.14 68.84,33.25 70.01,33.31 71.17,33.30 72.32,33.23 73.45,33.11 74.57,32.92 75.68,32.67 76.77,32.36 77.85,31.99 78.92,31.56 79.98,31.07 81.03,30.52 82.08,29.91 83.11,29.24 84.13,28.51 83.87,28.09 82.79,28.71 81.72,29.26 80.66,29.75 79.60,30.18 78.54,30.54 77.49,30.84 76.44,31.09 75.39,31.27 74.35,31.40 73.30,31.47 72.25,31.49 71.19,31.45 70.14,31.36 69.07,31.22 68.00,31.03 66.91,30.78 65.82,30.49 64.71,30.14 63.59,29.75 62.52,29.34 61.12,28.57 59.68,27.75 58.25,26.90 56.83,26.02 55.40,25.13 53.98,24.23 52.56,23.34 51.15,22.46 49.73,21.59 48.30,20.75 46.87,19.95 45.44,19.19 43.99,18.48 42.54,17.84 41.07,17.26 39.59,16.77 38.10,16.37 36.59,16.06 35.06,15.87 33.55,15.80 32.34,15.82 31.15,15.91 29.95,16.05 28.76,16.24 27.56,16.48 26.37,16.77 25.18,17.10 23.99,17.47 22.81,17.88 21.62,18.32 20.44,18.79 19.26,19.30 18.08,19.82 16.91,20.38 15.73,20.95 14.56,21.54 13.39,22.15 12.22,22.78 11.05,23.42 9.89,24.07" fill="#000"/></svg>
<div class="a" style="left:26px;top:293.5px;width:144px;height:15.5px;background:linear-gradient(#253240 0px,#253240 1.5px,#3c3434 4.5px,#363232 100%)"></div>
<div class="a" style="left:26px;top:293.5px;width:144px;height:1px;background:#78a8c8"></div>
<svg class="a" style="left:58.60px;top:294.20px;" width="56.6" height="15.7"><text x="4" y="11.80" font-size="8.70" fill="#c8c8c8" stroke="#c8c8c8" stroke-width="0.05" textLength="48.59" lengthAdjust="spacingAndGlyphs">Brush Control</text></svg>
<svg class="a" style="left:148.5px;top:297.5px;" width="8" height="7" viewBox="0 0 8 7"><path d="M4.5 1.5 L0.5 1.5 L0.5 6.5 L6.5 6.5 L6.5 3.5" fill="none" stroke="#c8c8c8" stroke-width="1"/><path d="M3.5 3.5 L7 0" stroke="#c8c8c8" stroke-width="1"/></svg>
<svg class="a" style="left:160.5px;top:297.8px;" width="7" height="6.7" viewBox="0 0 7 6.7"><path d="M0.9 0.9 L6.1 5.8 M6.1 0.9 L0.9 5.8" stroke="#dcdcdc" stroke-width="1.7"/></svg>
<div class="a" style="left:26px;top:309px;width:144px;height:126px;background:#242424"></div>
<div class="a" style="left:32.6px;top:318.2px;width:100.2px;height:12.4px;background:#161616"></div>
<div class="a" style="left:33.3px;top:318.75px;width:98.9px;height:11.25px;background:#fff"></div>
<div class="a" style="left:33.3px;top:318.75px;width:4.7px;height:11.25px;background:#5aa6e6"></div>
<div class="a" style="left:137.5px;top:316.9px;width:25.5px;height:15.1px;background:#3b3b3b;border:1px solid #333;border-radius:3px;"></div>
<svg class="a" style="left:140.50px;top:315.63px;" width="21.7" height="16.4"><text x="4" y="12.37" font-size="9.13" fill="#9c9c9c" stroke="#9c9c9c" stroke-width="0.15" textLength="13.70" lengthAdjust="spacingAndGlyphs">3.5</text></svg>
<div class="a" style="left:32.6px;top:336.6px;width:99.3px;height:13.2px;background:#161616"></div>
<div class="a" style="left:33.3px;top:337.2px;width:98px;height:12px;background:linear-gradient(to right,#72bdf2,#4d94d4)"></div>
<svg class="a" style="left:132.60px;top:334.90px;" width="34.8" height="15.7"><text x="4" y="11.10" font-size="8.70" fill="#d4d4d4" stroke="#d4d4d4" stroke-width="0.15" textLength="26.81" lengthAdjust="spacingAndGlyphs">100 %</text></svg>
<div class="a" style="left:26px;top:435px;width:144px;height:15.5px;background:linear-gradient(#253240 0px,#253240 1.5px,#3c3434 4.5px,#363232 100%)"></div>
<div class="a" style="left:26px;top:435px;width:144px;height:1px;background:#78a8c8"></div>
<svg class="a" style="left:62.80px;top:436.51px;" width="47.4" height="15.9"><text x="4" y="11.49" font-size="8.84" fill="#c8c8c8" stroke="#c8c8c8" stroke-width="0.05" textLength="39.40" lengthAdjust="spacingAndGlyphs">Brush: Pen</text></svg>
<svg class="a" style="left:148.5px;top:439px;" width="8" height="7" viewBox="0 0 8 7"><path d="M4.5 1.5 L0.5 1.5 L0.5 6.5 L6.5 6.5 L6.5 3.5" fill="none" stroke="#c8c8c8" stroke-width="1"/><path d="M3.5 3.5 L7 0" stroke="#c8c8c8" stroke-width="1"/></svg>
<svg class="a" style="left:160.5px;top:439.3px;" width="7" height="6.7" viewBox="0 0 7 6.7"><path d="M0.9 0.9 L6.1 5.8 M6.1 0.9 L0.9 5.8" stroke="#dcdcdc" stroke-width="1.7"/></svg>
<div class="a" style="left:26px;top:450.5px;width:144px;height:95.5px;background:#242424"></div>
<div class="a" style="left:28.1px;top:452.6px;width:126px;height:68.5px;background:#3a3a3a"></div>
<div class="a" style="left:28.1px;top:453.2px;width:126px;height:68px;overflow:hidden">
</div>
<div class="a" style="left:28.1px;top:453.2px;width:126px;height:14.9px;background:#4f97d6"></div>
<div class="a" style="left:30.2px;top:455.4px;width:10.3px;height:10.2px;background:#2a2a2a;border:0.6px solid #222"></div>
<div class="a" style="left:28.1px;top:468.09999999999997px;width:126px;height:14.9px;background:#575757"></div>
<div class="a" style="left:28.1px;top:468.09999999999997px;width:126px;height:0.8px;background:#666"></div>
<div class="a" style="left:30.2px;top:470.29999999999995px;width:10.3px;height:10.2px;background:#dcdcdc;border:0.6px solid #222"></div>
<div class="a" style="left:28.1px;top:483.2px;width:126px;height:14.9px;background:#575757"></div>
<div class="a" style="left:28.1px;top:483.2px;width:126px;height:0.8px;background:#666"></div>
<div class="a" style="left:30.2px;top:485.4px;width:10.3px;height:10.2px;background:#2a2a2a;border:0.6px solid #222"></div>
<div class="a" style="left:28.1px;top:498.3px;width:126px;height:14.9px;background:#575757"></div>
<div class="a" style="left:28.1px;top:498.3px;width:126px;height:0.8px;background:#666"></div>
<div class="a" style="left:30.2px;top:500.5px;width:10.3px;height:10.2px;background:#3552f8;border:0.6px solid #222"></div>
<div class="a" style="left:28.1px;top:513.4px;width:126px;height:7.800000000000068px;background:#575757"></div>
<div class="a" style="left:28.1px;top:513.4px;width:126px;height:0.8px;background:#666"></div>
<div class="a" style="left:30.2px;top:515.6px;width:10.3px;height:5.600000000000068px;background:#2a2a2a;border:0.6px solid #222"></div>
<svg class="a" style="left:40.80px;top:453.08px;" width="22.2" height="15.4"><text x="4" y="10.92" font-size="8.55" fill="#e87a7a" stroke="#e87a7a" stroke-width="0.15" textLength="14.20" lengthAdjust="spacingAndGlyphs">3.5</text></svg>
<svg class="a" style="left:64.90px;top:453.08px;" width="24.2" height="15.4"><text x="4" y="10.92" font-size="8.55" fill="#f2f2f2" stroke="#f2f2f2" stroke-width="0.3" font-weight="bold" textLength="16.19" lengthAdjust="spacingAndGlyphs">Pen</text></svg>
<svg class="a" style="left:40.80px;top:467.93px;" width="27.9" height="15.4"><text x="4" y="11.07" font-size="8.55" fill="#e87a7a" stroke="#e87a7a" stroke-width="0.15" textLength="19.90" lengthAdjust="spacingAndGlyphs">1000</text></svg>
<svg class="a" style="left:64.90px;top:467.93px;" width="40.3" height="15.4"><text x="4" y="11.07" font-size="8.55" fill="#f2f2f2" stroke="#f2f2f2" stroke-width="0.15" textLength="32.35" lengthAdjust="spacingAndGlyphs">AirBrush</text></svg>
<svg class="a" style="left:40.80px;top:482.78px;" width="18.0" height="15.4"><text x="4" y="11.22" font-size="8.55" fill="#e6e6e6" stroke="#e6e6e6" stroke-width="0.15" textLength="10.00" lengthAdjust="spacingAndGlyphs">15</text></svg>
<svg class="a" style="left:64.90px;top:482.78px;" width="83.9" height="15.4"><text x="4" y="11.22" font-size="8.55" fill="#f2f2f2" stroke="#f2f2f2" stroke-width="0.15" textLength="75.89" lengthAdjust="spacingAndGlyphs">Pen (Fade In/Out)</text></svg>
<svg class="a" style="left:40.80px;top:497.63px;" width="23.0" height="15.4"><text x="4" y="11.37" font-size="8.55" fill="#e6e6e6" stroke="#e6e6e6" stroke-width="0.15" textLength="14.96" lengthAdjust="spacingAndGlyphs">150</text></svg>
<svg class="a" style="left:64.90px;top:497.63px;" width="62.9" height="15.4"><text x="4" y="11.37" font-size="8.55" fill="#f2f2f2" stroke="#f2f2f2" stroke-width="0.15" textLength="54.86" lengthAdjust="spacingAndGlyphs">Flower Stamp</text></svg>
<div class="a" style="left:28.1px;top:513.3px;width:126px;height:8px;overflow:hidden">
<div class="a" style="left:-28.1px;top:-513.3px;width:300px;height:600px">
<svg class="a" style="left:40.80px;top:512.48px;" width="18.0" height="15.4"><text x="4" y="11.52" font-size="8.55" fill="#e6e6e6" stroke="#e6e6e6" stroke-width="0.15" textLength="10.00" lengthAdjust="spacingAndGlyphs">10</text></svg>
<svg class="a" style="left:64.90px;top:512.48px;" width="35.1" height="15.4"><text x="4" y="11.52" font-size="8.55" fill="#f2f2f2" stroke="#f2f2f2" stroke-width="0.15" textLength="27.11" lengthAdjust="spacingAndGlyphs">Pencil</text></svg>
</div></div>
<svg class="a" style="left:141.3px;top:456px;" width="10" height="10" viewBox="0 0 10 10"><g fill="#fff"><circle cx="5" cy="5" r="3.3"/><g transform="translate(5 5)"><rect x="-1" y="-4.8" width="2" height="9.6"/><rect x="-1" y="-4.8" width="2" height="9.6" transform="rotate(45)"/><rect x="-1" y="-4.8" width="2" height="9.6" transform="rotate(90)"/><rect x="-1" y="-4.8" width="2" height="9.6" transform="rotate(135)"/></g></g><circle cx="5" cy="5" r="1.3" fill="#4f97d6"/></svg>
<div class="a" style="left:155.7px;top:452.6px;width:13px;height:68.6px;background:#2c2c2c"></div>
<svg class="a" style="left:157.8px;top:454.5px;" width="7" height="5" viewBox="0 0 7 5"><path d="M0 5 L3.5 0 L7 5Z" fill="#c4c4c4"/></svg>
<div class="a" style="left:156.3px;top:461px;width:11.8px;height:51px;background:linear-gradient(to right,#3a3a3a,#4a4a4a 50%,#3a3a3a);border-radius:2px"></div>
<div class="a" style="left:156.3px;top:461px;width:11.8px;height:3.5px;background:#6e6e6e;border-radius:2px 2px 0 0"></div>
<svg class="a" style="left:157.8px;top:514.5px;" width="7" height="5" viewBox="0 0 7 5"><path d="M0 0 L7 0 L3.5 5Z" fill="#c4c4c4"/></svg>
<div class="a" style="left:31.5px;top:523px;width:16.3px;height:18px;background:#3e3e3e;border:1px solid #4b4b4b;border-radius:3px;"></div>
<svg class="a" style="left:31.5px;top:523px;" width="16.3" height="18" viewBox="0 0 16.3 18"><path d="M4 11.5 C1.8 11.5,1.6 8.2,3.7 7.8 C3.9 5,6.5 3.3,8.7 3.8 C10.8 4.2,12 5.5,12.4 7.3 C14.6 7.3,15.3 11.3,12.8 11.5Z" fill="#e8e8e8"/><path d="M8.2 16.5 V9.5 M5.6 12 L8.2 9.2 L10.8 12" stroke="#3e3e3e" stroke-width="3.2" fill="none"/><path d="M8.2 16.3 V9.8 M6 12 L8.2 9.6 L10.4 12" stroke="#e8e8e8" stroke-width="1.7" fill="none"/></svg>
<div class="a" style="left:51.3px;top:523px;width:16.7px;height:18px;background:#3e3e3e;border:1px solid #4b4b4b;border-radius:3px;"></div>
<svg class="a" style="left:51.3px;top:523px;" width="16.7" height="18" viewBox="0 0 16.7 18"><path d="M5 3.5 L10 3.5 L12.5 6 L12.5 14.5 L5 14.5Z" fill="none" stroke="#ddd" stroke-width="1.1"/><path d="M10 3.5 L10 6 L12.5 6Z" fill="#ddd"/></svg>
<div class="a" style="left:71.1px;top:523px;width:23px;height:18px;background:#3e3e3e;border:1px solid #4b4b4b;border-radius:3px;"></div>
<svg class="a" style="left:71.1px;top:523px;" width="23" height="18" viewBox="0 0 23 18"><path d="M4 3.5 L8.5 3.5 L10.5 5.5 L10.5 14.5 L4 14.5Z" fill="none" stroke="#ddd" stroke-width="1"/><rect x="5.3" y="8" width="2.2" height="2.2" fill="#ddd"/><rect x="7.5" y="10.2" width="2.2" height="2.2" fill="#ddd"/><path d="M14.5 8.5 L19 8.5 L16.75 11Z" fill="#ddd"/></svg>
<div class="a" style="left:97.2px;top:523px;width:16.8px;height:18px;background:#3e3e3e;border:1px solid #4b4b4b;border-radius:3px;"></div>
<svg class="a" style="left:97.2px;top:523px;" width="16.8" height="18" viewBox="0 0 16.8 18"><path d="M5 3.5 L10 3.5 L12.5 6 L12.5 14.5 L5 14.5Z" fill="none" stroke="#ddd" stroke-width="1"/><text x="8.7" y="12.5" font-size="7" fill="#ddd" text-anchor="middle" font-family="Liberation Sans">S</text></svg>
<div class="a" style="left:117px;top:523px;width:17.4px;height:18px;background:#3e3e3e;border:1px solid #4b4b4b;border-radius:3px;"></div>
<svg class="a" style="left:117px;top:523px;" width="17.4" height="18" viewBox="0 0 17.4 18"><path d="M3.5 5 L7.5 5 L8.5 6.5 L14 6.5 L14 13.5 L3.5 13.5Z" fill="#e4e4e4"/></svg>
<div class="a" style="left:136.9px;top:523px;width:17.8px;height:18px;background:#3e3e3e;border:1px solid #4b4b4b;border-radius:3px;"></div>
<svg class="a" style="left:136.9px;top:523px;" width="17.8" height="18" viewBox="0 0 17.8 18"><rect x="4" y="6.5" width="7.5" height="7.5" fill="none" stroke="#ddd" stroke-width="1"/><path d="M6.5 6.5 V4 H14 V11.5 H11.5" fill="none" stroke="#ddd" stroke-width="1"/></svg>
<div class="a" style="left:160.3px;top:523px;width:7px;height:18px;background:#474747;border:1px solid #3a3a3a;border-radius:3px;"></div>
<div class="a" style="left:173px;top:57px;width:584px;height:489px;background:#262626"></div>
<div class="a" style="left:173.5px;top:56.5px;width:581px;height:17.5px;background:#232323"></div>
<div class="a" style="left:174px;top:56.5px;width:291px;height:16.2px;background:linear-gradient(#474747,#3a3a3a 40%,#2d2d2d)"></div>
<svg class="a" style="left:300.75px;top:56.95px;" width="35.5" height="14.6"><text x="4" y="11.05" font-size="8.12" fill="#c4c4c4" stroke="#c4c4c4" stroke-width="0.05">Untitled</text></svg>
<div class="a" style="left:173.5px;top:72.7px;width:566px;height:0.8px;background:#1a1a1a"></div>
<div class="a" style="left:173.5px;top:73.5px;width:565.5px;height:456.2px;background:#4a4847"></div>
<div class="a" style="left:739px;top:73.5px;width:15px;height:457px;background:linear-gradient(to right,#2c2c2c,#393939 50%,#2c2c2c)"></div>
<div class="a" style="left:739px;top:74px;width:14.7px;height:8px;background:#2a2a2a"></div>
<svg class="a" style="left:743.5px;top:76.3px;" width="6" height="4.6" viewBox="0 0 6 4.6"><path d="M0 4.6 L3 0 L6 4.6Z" fill="#c4c4c4"/></svg>
<div class="a" style="left:740.3px;top:246.4px;width:12.5px;height:119.4px;background:#6b6b6b;border:1px solid #5a5a5a;border-radius:5px;"></div>
<div class="a" style="left:739px;top:520px;width:15px;height:10px;background:#262626"></div>
<div class="a" style="left:173.5px;top:529.7px;width:580.5px;height:15.3px;background:linear-gradient(#404040,#333 40%,#282828)"></div>
<div class="a" style="left:173.5px;top:529.7px;width:580.5px;height:0.8px;background:#2a2a2a"></div>
<div class="a" style="left:173.5px;top:530.5px;width:12px;height:14.5px;background:#2c2c2c"></div>
<svg class="a" style="left:176px;top:534.8px;" width="4.6" height="5.6" viewBox="0 0 4.6 5.6"><path d="M4.6 0 L4.6 5.6 L0 2.8Z" fill="#c4c4c4"/></svg>
<div class="a" style="left:381px;top:531.5px;width:151.5px;height:12.5px;background:#6b6b6b;border:1px solid #5a5a5a;border-radius:5px;"></div>
<div class="a" style="left:739px;top:529.7px;width:15px;height:15.3px;background:#242424"></div>
<svg class="a" style="left:743.8px;top:523.5px;" width="5.6" height="4.6" viewBox="0 0 5.6 4.6"><path d="M0 0 L5.6 0 L2.8 4.6Z" fill="#c4c4c4"/></svg>
<svg class="a" style="left:747.5px;top:534.8px;" width="4.6" height="5.6" viewBox="0 0 4.6 5.6"><path d="M0 0 L0 5.6 L4.6 2.8Z" fill="#c4c4c4"/></svg>
<div class="a" style="left:754px;top:57px;width:3.2px;height:489px;background:#1c1c1c"></div>
<svg class="a" style="left:284px;top:136px;overflow:hidden" width="399" height="299" viewBox="0 0 399 299">
<defs>
<linearGradient id="skyv" x1="0" y1="0" x2="0" y2="1"><stop offset="0" stop-color="#fafafa" stop-opacity="0"/><stop offset="0.12" stop-color="#fafafa" stop-opacity="0.15"/><stop offset="0.25" stop-color="#fafafa" stop-opacity="0.5"/><stop offset="0.33" stop-color="#fafafa" stop-opacity="0.88"/><stop offset="0.4" stop-color="#fafafa" stop-opacity="1"/></linearGradient>
<linearGradient id="skyh" x1="0" y1="0" x2="1" y2="0"><stop offset="0" stop-color="#f2f0d8"/><stop offset="0.22" stop-color="#f0f4e8"/><stop offset="0.45" stop-color="#dff4fb"/><stop offset="0.62" stop-color="#e3e8fb"/><stop offset="0.76" stop-color="#e8e0f9"/><stop offset="1" stop-color="#ece8f0"/></linearGradient>
<radialGradient id="headg" cx="0.38" cy="0.42" r="0.75"><stop offset="0.6" stop-color="#fff"/><stop offset="1" stop-color="#cfcfcf"/></radialGradient>
</defs>
<rect x="0" y="0" width="399" height="299" fill="url(#skyh)"/>
<rect x="0" y="0" width="399" height="299" fill="url(#skyv)"/>
<path d="M211 148.6 C 235 134, 265 121, 300 118.5 L399 118 L399 299 L211 299Z" fill="#69a65c"/>
<path d="M0 102.9 C 30 102.6, 50 102.3, 65 103.5 C 95 107, 125 116, 156 127 C 180 136, 195 142, 211 148.6 C 255 177.5, 325 231, 399 279 L399 299 L0 299Z" fill="#8cc068"/>

<g transform="translate(-284,-136)" stroke="#93702e" stroke-width="2.3" stroke-linejoin="round" stroke-linecap="round">
<path d="M436.5 445 L437 436 C437 424, 439 412, 441.5 403.5 C435 400, 428 397, 423.5 394.5 C420 392, 419.5 387, 422.5 385.5 C426 384, 430 384.5, 434 385.5 C429 378, 427.5 371, 427.5 364 C427.5 343, 447 326.8, 471 326.8 C495 326.8, 515.2 343, 515.2 362 C515.2 372, 512 381, 508 387 C511 388, 514 389, 516.5 390 C519 391.5, 518 395.5, 515 396.5 C508 398.5, 501 399.5, 496.4 400 C498 410, 499 424, 499 436 L499.5 445Z" fill="url(#headg)"/>
<path d="M434 385.5 C 439 388, 444 391, 450.5 395" fill="none"/>
<path d="M508 387 C 503 390, 498 392.5, 491.5 395.5" fill="none"/>
<path d="M475.5 326 C 474 321, 476 318, 480 317.5 C 484 317, 485.5 313, 483 311.5 C 480.5 310.5, 479 313.5, 480.5 315.5 C 482 317.5, 486 319, 485.5 321 C 485 322.5, 482 322, 481 319" fill="none" stroke-width="1.5"/>
</g>
<g transform="translate(-284,-136)">
<circle cx="462.3" cy="356.3" r="3.6" fill="#7d5a2a"/>
<circle cx="482.6" cy="356.3" r="3.6" fill="#7d5a2a"/>
<ellipse cx="457.5" cy="359.8" rx="3" ry="1.8" fill="#f4a0a8" opacity="0.85"/>
<ellipse cx="487.4" cy="359.8" rx="3" ry="1.8" fill="#f4a0a8" opacity="0.85"/>
<path d="M467 363.3 C 470 365, 474.5 365, 478 362.8 C 477.5 367, 475 369.8, 472.5 369.8 C 469.5 369.8, 467.5 367, 467 363.3Z" fill="#e8505a" stroke="#9a5a3a" stroke-width="0.8"/>
</g>
<g transform="translate(-284,-136)" fill="#111" font-family="Liberation Sans" font-weight="bold">
<circle cx="647" cy="422.7" r="2.6" fill="none" stroke="#111" stroke-width="0.9"/>
<text x="650.5" y="425" font-size="5.2" textLength="19.5" lengthAdjust="spacingAndGlyphs">Lulu8</text>
<path d="M645.5 428 C645.5 427,647 427,647 428 C647 427,648.5 427,648.5 428 L647 430Z"/>
<text x="650.5" y="430.6" font-size="4.8" textLength="25.8" lengthAdjust="spacingAndGlyphs">huidap293</text></g></svg>
<div class="a" style="left:757px;top:57px;width:267px;height:489px;background:#1c1c1c"></div>
<div class="a" style="left:757px;top:57px;width:267px;height:15.5px;background:linear-gradient(#253240 0px,#253240 1.5px,#3c3434 4.5px,#363232 100%)"></div>
<div class="a" style="left:757px;top:57px;width:267px;height:1px;background:#78a8c8"></div>
<svg class="a" style="left:857.90px;top:58.45px;" width="43.0" height="14.6"><text x="4" y="10.55" font-size="8.12" fill="#c8c8c8" stroke="#c8c8c8" stroke-width="0.05" textLength="35.00" lengthAdjust="spacingAndGlyphs">Navigator</text></svg>
<svg class="a" style="left:1002.5px;top:61px;" width="8" height="7" viewBox="0 0 8 7"><path d="M4.5 1.5 L0.5 1.5 L0.5 6.5 L6.5 6.5 L6.5 3.5" fill="none" stroke="#c8c8c8" stroke-width="1"/><path d="M3.5 3.5 L7 0" stroke="#c8c8c8" stroke-width="1"/></svg>
<svg class="a" style="left:1014.5px;top:61.3px;" width="7" height="6.7" viewBox="0 0 7 6.7"><path d="M0.9 0.9 L6.1 5.8 M6.1 0.9 L0.9 5.8" stroke="#dcdcdc" stroke-width="1.7"/></svg>
<div class="a" style="left:757px;top:72.5px;width:267px;height:22.3px;background:#222"></div>
<div class="a" style="left:760.9px;top:76px;width:17.3px;height:16.7px;background:#3e3e3e;border:1px solid #4b4b4b;border-radius:3px;"></div>
<svg class="a" style="left:760.9px;top:76px;" width="17.3" height="16.7" viewBox="0 0 17.3 16.7"><circle cx="7.6" cy="7.8" r="3.6" fill="none" stroke="#e4e4e4" stroke-width="1.1"/><path d="M10.2 10.4 L13 13" stroke="#e4e4e4" stroke-width="1.7"/><path d="M7.6 5.8 V9.8" stroke="#e4e4e4" stroke-width="1.1"/></svg>
<div class="a" style="left:785.9px;top:76px;width:17.3px;height:16.7px;background:#3e3e3e;border:1px solid #4b4b4b;border-radius:3px;"></div>
<svg class="a" style="left:785.9px;top:76px;" width="17.3" height="16.7" viewBox="0 0 17.3 16.7"><circle cx="7.6" cy="7.8" r="3.6" fill="none" stroke="#e4e4e4" stroke-width="1.1"/><path d="M10.2 10.4 L13 13" stroke="#e4e4e4" stroke-width="1.7"/><path d="M5.8 7.8 H9.4 M7.6 6 V9.6" stroke="#e4e4e4" stroke-width="1.1"/></svg>
<div class="a" style="left:806px;top:76px;width:17.3px;height:16.7px;background:#3e3e3e;border:1px solid #4b4b4b;border-radius:3px;"></div>
<svg class="a" style="left:806px;top:76px;" width="17.3" height="16.7" viewBox="0 0 17.3 16.7"><rect x="3.5" y="3.5" width="10.5" height="10" fill="none" stroke="#bbb" stroke-width="0.9"/><path d="M4.5 4.5 L6.5 6.5 M13 4.5 L11 6.5 M4.5 12.5 L6.5 10.5 M13 12.5 L11 10.5" stroke="#e4e4e4" stroke-width="1"/></svg>
<div class="a" style="left:826.2px;top:76px;width:17.3px;height:16.7px;background:#3e3e3e;border:1px solid #4b4b4b;border-radius:3px;"></div>
<svg class="a" style="left:826.2px;top:76px;" width="17.3" height="16.7" viewBox="0 0 17.3 16.7"><circle cx="7.6" cy="7.8" r="3.6" fill="none" stroke="#e4e4e4" stroke-width="1.1"/><path d="M10.2 10.4 L13 13" stroke="#e4e4e4" stroke-width="1.7"/><path d="M5.8 7.8 H9.4" stroke="#e4e4e4" stroke-width="1.3"/></svg>
<div class="a" style="left:852.3px;top:76px;width:17.3px;height:16.7px;background:#3e3e3e;border:1px solid #4b4b4b;border-radius:3px;"></div>
<svg class="a" style="left:852.3px;top:76px;" width="17.3" height="16.7" viewBox="0 0 17.3 16.7"><path d="M5.6 4.3 A5 5 0 1 0 8.2 3.55" fill="none" stroke="#e4e4e4" stroke-width="1.1"/><path d="M7.6 1.8 L10 3.5 L7.8 5.4Z" fill="#e4e4e4"/><rect x="6.3" y="6.6" width="4.6" height="4" fill="#e4e4e4" transform="rotate(-25 8.6 8.6)"/></svg>
<div class="a" style="left:872.8px;top:76px;width:17px;height:16.7px;background:#2c2c2c;border:1px solid #0e0e0e;border-radius:3px;"></div>
<svg class="a" style="left:872.8px;top:76px;" width="17" height="16.7" viewBox="0 0 17 16.7"><rect x="5.3" y="5.8" width="6.4" height="5.6" fill="#e4e4e4"/><path d="M5.5 6 L3.3 3.8 M11.5 6 L13.7 3.8 M5.5 11.2 L3.3 13.4 M11.5 11.2 L13.7 13.4" stroke="#e4e4e4" stroke-width="1"/></svg>
<div class="a" style="left:893px;top:76px;width:17.3px;height:16.7px;background:#3e3e3e;border:1px solid #4b4b4b;border-radius:3px;"></div>
<svg class="a" style="left:893px;top:76px;" width="17.3" height="16.7" viewBox="0 0 17.3 16.7"><path d="M11.4 4.3 A5 5 0 1 1 8.8 3.55" fill="none" stroke="#e4e4e4" stroke-width="1.1"/><path d="M9.4 1.8 L7 3.5 L9.2 5.4Z" fill="#e4e4e4"/><rect x="6.1" y="6.6" width="4.6" height="4" fill="#e4e4e4" transform="rotate(25 8.4 8.6)"/></svg>
<div class="a" style="left:918.6px;top:76px;width:17.3px;height:16.7px;background:#3e3e3e;border:1px solid #4b4b4b;border-radius:3px;"></div>
<svg class="a" style="left:918.6px;top:76px;" width="17.3" height="16.7" viewBox="0 0 17.3 16.7"><path d="M5.2 8 C5.2 4.2,11.8 4.2,11.8 8" fill="none" stroke="#e4e4e4" stroke-width="0.9"/><rect x="3.3" y="8" width="3.8" height="5.8" fill="#e4e4e4"/><rect x="10.3" y="8.5" width="3.2" height="5.3" fill="none" stroke="#e4e4e4" stroke-width="0.9"/></svg>
<div class="a" style="left:781.7px;top:80.5px;width:1px;height:8px;background:#444"></div>
<div class="a" style="left:848px;top:80.5px;width:1px;height:8px;background:#444"></div>
<div class="a" style="left:913.8px;top:80.5px;width:1px;height:8px;background:#444"></div>
<div class="a" style="left:757px;top:94.8px;width:267px;height:69px;background:#4a4847"></div>
<div class="a" style="left:822px;top:94.8px;width:2.2px;height:69px;background:#e02828"></div>
<div class="a" style="left:946px;top:94.8px;width:2px;height:69px;background:#e02828"></div>
<svg class="a" style="left:845.6px;top:94.8px;overflow:hidden" width="90.4" height="68.9" viewBox="0 0 90.4 68.9"><g transform="scale(0.22657,0.23043)">
<defs>
<linearGradient id="nskyv" x1="0" y1="0" x2="0" y2="1"><stop offset="0" stop-color="#fafafa" stop-opacity="0"/><stop offset="0.12" stop-color="#fafafa" stop-opacity="0.15"/><stop offset="0.25" stop-color="#fafafa" stop-opacity="0.5"/><stop offset="0.33" stop-color="#fafafa" stop-opacity="0.88"/><stop offset="0.4" stop-color="#fafafa" stop-opacity="1"/></linearGradient>
<linearGradient id="nskyh" x1="0" y1="0" x2="1" y2="0"><stop offset="0" stop-color="#f2f0d8"/><stop offset="0.22" stop-color="#f0f4e8"/><stop offset="0.45" stop-color="#dff4fb"/><stop offset="0.62" stop-color="#e3e8fb"/><stop offset="0.76" stop-color="#e8e0f9"/><stop offset="1" stop-color="#ece8f0"/></linearGradient>
<radialGradient id="nheadg" cx="0.38" cy="0.42" r="0.75"><stop offset="0.6" stop-color="#fff"/><stop offset="1" stop-color="#cfcfcf"/></radialGradient>
</defs>
<rect x="0" y="0" width="399" height="299" fill="url(#nskyh)"/>
<rect x="0" y="0" width="399" height="299" fill="url(#nskyv)"/>
<path d="M211 148.6 C 235 134, 265 121, 300 118.5 L399 118 L399 299 L211 299Z" fill="#69a65c"/>
<path d="M0 102.9 C 30 102.6, 50 102.3, 65 103.5 C 95 107, 125 116, 156 127 C 180 136, 195 142, 211 148.6 C 255 177.5, 325 231, 399 279 L399 299 L0 299Z" fill="#8cc068"/>

<g transform="translate(-284,-136)" stroke="#93702e" stroke-width="2.3" stroke-linejoin="round" stroke-linecap="round">
<path d="M436.5 445 L437 436 C437 424, 439 412, 441.5 403.5 C435 400, 428 397, 423.5 394.5 C420 392, 419.5 387, 422.5 385.5 C426 384, 430 384.5, 434 385.5 C429 378, 427.5 371, 427.5 364 C427.5 343, 447 326.8, 471 326.8 C495 326.8, 515.2 343, 515.2 362 C515.2 372, 512 381, 508 387 C511 388, 514 389, 516.5 390 C519 391.5, 518 395.5, 515 396.5 C508 398.5, 501 399.5, 496.4 400 C498 410, 499 424, 499 436 L499.5 445Z" fill="url(#nheadg)"/>
<path d="M434 385.5 C 439 388, 444 391, 450.5 395" fill="none"/>
<path d="M508 387 C 503 390, 498 392.5, 491.5 395.5" fill="none"/>
<path d="M475.5 326 C 474 321, 476 318, 480 317.5 C 484 317, 485.5 313, 483 311.5 C 480.5 310.5, 479 313.5, 480.5 315.5 C 482 317.5, 486 319, 485.5 321 C 485 322.5, 482 322, 481 319" fill="none" stroke-width="1.5"/>
</g>
<g transform="translate(-284,-136)">
<circle cx="462.3" cy="356.3" r="3.6" fill="#7d5a2a"/>
<circle cx="482.6" cy="356.3" r="3.6" fill="#7d5a2a"/>
<ellipse cx="457.5" cy="359.8" rx="3" ry="1.8" fill="#f4a0a8" opacity="0.85"/>
<ellipse cx="487.4" cy="359.8" rx="3" ry="1.8" fill="#f4a0a8" opacity="0.85"/>
<path d="M467 363.3 C 470 365, 474.5 365, 478 362.8 C 477.5 367, 475 369.8, 472.5 369.8 C 469.5 369.8, 467.5 367, 467 363.3Z" fill="#e8505a" stroke="#9a5a3a" stroke-width="0.8"/>
</g>
</g></svg>
<div class="a" style="left:757px;top:163.8px;width:267px;height:4px;background:#1c1c1c"></div>
<div class="a" style="left:757px;top:167.8px;width:267px;height:15.5px;background:linear-gradient(#253240 0px,#253240 1.5px,#3c3434 4.5px,#363232 100%)"></div>
<div class="a" style="left:757px;top:167.8px;width:267px;height:1px;background:#78a8c8"></div>
<svg class="a" style="left:863.00px;top:168.37px;" width="31.0" height="15.1"><text x="4" y="10.63" font-size="8.41" fill="#c8c8c8" stroke="#c8c8c8" stroke-width="0.05" textLength="22.99" lengthAdjust="spacingAndGlyphs">Layer</text></svg>
<svg class="a" style="left:1002.5px;top:171.8px;" width="8" height="7" viewBox="0 0 8 7"><path d="M4.5 1.5 L0.5 1.5 L0.5 6.5 L6.5 6.5 L6.5 3.5" fill="none" stroke="#c8c8c8" stroke-width="1"/><path d="M3.5 3.5 L7 0" stroke="#c8c8c8" stroke-width="1"/></svg>
<svg class="a" style="left:1014.5px;top:172.10000000000002px;" width="7" height="6.7" viewBox="0 0 7 6.7"><path d="M0.9 0.9 L6.1 5.8 M6.1 0.9 L0.9 5.8" stroke="#dcdcdc" stroke-width="1.7"/></svg>
<div class="a" style="left:757px;top:183.3px;width:267px;height:121.5px;background:#242424"></div>
<svg class="a" style="left:758.00px;top:185.60px;" width="35.1" height="15.7"><text x="4" y="11.40" font-size="8.70" fill="#d0d0d0" stroke="#d0d0d0" stroke-width="0.15" textLength="27.10" lengthAdjust="spacingAndGlyphs">Opacity</text></svg>
<div class="a" style="left:828.6px;top:187.75px;width:156.4px;height:11.5px;background:#151515"></div>
<div class="a" style="left:829.3px;top:188.4px;width:155px;height:10.2px;background:linear-gradient(to right,#74bef4,#4e95d6)"></div>
<svg class="a" style="left:986.20px;top:186.53px;" width="31.0" height="14.1"><text x="4" y="10.47" font-size="7.83" fill="#d0d0d0" stroke="#d0d0d0" stroke-width="0.15" textLength="23.00" lengthAdjust="spacingAndGlyphs">100 %</text></svg>
<svg class="a" style="left:758.00px;top:204.03px;" width="38.0" height="16.4"><text x="4" y="11.97" font-size="9.13" fill="#d0d0d0" stroke="#d0d0d0" stroke-width="0.15" textLength="30.00" lengthAdjust="spacingAndGlyphs">Blending</text></svg>
<div class="a" style="left:830.75px;top:204px;width:189px;height:16px;background:#404040;border:1px solid #363636;border-radius:2px;"></div>
<svg class="a" style="left:828.50px;top:204.03px;" width="32.8" height="16.4"><text x="4" y="11.97" font-size="9.13" fill="#d0d0d0" stroke="#d0d0d0" stroke-width="0.15" textLength="24.75" lengthAdjust="spacingAndGlyphs">Normal</text></svg>
<svg class="a" style="left:1010.8px;top:210.3px;" width="5.6" height="3.4" viewBox="0 0 5.6 3.4"><path d="M0 0 L5.6 0 L2.8 3.4Z" fill="#aaa"/></svg>
<div class="a" style="left:763.75px;top:228.4px;width:9.2px;height:7.5px;border:1px solid #c0c0c0"></div>
<svg class="a" style="left:773.00px;top:223.95px;" width="56.0" height="15.7"><text x="4" y="11.05" font-size="8.70" fill="#d0d0d0" stroke="#d0d0d0" stroke-width="0.15" textLength="47.99" lengthAdjust="spacingAndGlyphs">Protect Alpha</text></svg>
<div class="a" style="left:852.5px;top:228.4px;width:8px;height:7.5px;border:1px solid #474747"></div>
<svg class="a" style="left:860.75px;top:223.95px;" width="39.3" height="15.7"><text x="4" y="11.05" font-size="8.70" fill="#6e6e6e" stroke="#6e6e6e" stroke-width="0.15" textLength="31.26" lengthAdjust="spacingAndGlyphs">Clipping</text></svg>
<div class="a" style="left:939px;top:228.2px;width:8.8px;height:7.6px;border:1px solid #c0c0c0"></div>
<svg class="a" style="left:947.80px;top:223.95px;" width="23.4" height="15.7"><text x="4" y="11.05" font-size="8.70" fill="#d0d0d0" stroke="#d0d0d0" stroke-width="0.15" textLength="15.38" lengthAdjust="spacingAndGlyphs">Lock</text></svg>
<div class="a" style="left:760.4px;top:242px;width:247.3px;height:37px;background:#2a2a2a"></div>
<div class="a" style="left:760.4px;top:242px;width:247.3px;height:7.8px;background:#5b5b5b"></div>
<div class="a" style="left:785px;top:242px;width:26.5px;height:2.3px;background:#eeeeee"></div>
<div class="a" style="left:760.4px;top:249.8px;width:13.6px;height:28.7px;background:#5b5b5b"></div>
<svg class="a" style="left:762px;top:260.5px;" width="8.5" height="8.5" viewBox="0 0 8.5 8.5"><circle cx="4.25" cy="4.25" r="3.5" fill="#e6e6e6"/></svg>
<div class="a" style="left:774px;top:249.8px;width:233.7px;height:28.7px;background:#4f97d6"></div>
<svg class="a" style="left:784.4px;top:255.6px;overflow:hidden" width="27.3" height="18.4" viewBox="0 0 27.3 18.4"><g transform="scale(0.06842,0.06154)">
<defs>
<linearGradient id="lskyv" x1="0" y1="0" x2="0" y2="1"><stop offset="0" stop-color="#fafafa" stop-opacity="0"/><stop offset="0.12" stop-color="#fafafa" stop-opacity="0.15"/><stop offset="0.25" stop-color="#fafafa" stop-opacity="0.5"/><stop offset="0.33" stop-color="#fafafa" stop-opacity="0.88"/><stop offset="0.4" stop-color="#fafafa" stop-opacity="1"/></linearGradient>
<linearGradient id="lskyh" x1="0" y1="0" x2="1" y2="0"><stop offset="0" stop-color="#f2f0d8"/><stop offset="0.22" stop-color="#f0f4e8"/><stop offset="0.45" stop-color="#dff4fb"/><stop offset="0.62" stop-color="#e3e8fb"/><stop offset="0.76" stop-color="#e8e0f9"/><stop offset="1" stop-color="#ece8f0"/></linearGradient>
<radialGradient id="lheadg" cx="0.38" cy="0.42" r="0.75"><stop offset="0.6" stop-color="#fff"/><stop offset="1" stop-color="#cfcfcf"/></radialGradient>
</defs>
<rect x="0" y="0" width="399" height="299" fill="url(#lskyh)"/>
<rect x="0" y="0" width="399" height="299" fill="url(#lskyv)"/>
<path d="M211 148.6 C 235 134, 265 121, 300 118.5 L399 118 L399 299 L211 299Z" fill="#69a65c"/>
<path d="M0 102.9 C 30 102.6, 50 102.3, 65 103.5 C 95 107, 125 116, 156 127 C 180 136, 195 142, 211 148.6 C 255 177.5, 325 231, 399 279 L399 299 L0 299Z" fill="#8cc068"/>
</g><rect x="0.3" y="0.3" width="26.7" height="17.8" fill="none" stroke="#a8c4dc" stroke-width="0.6"/></svg>
<svg class="a" style="left:819.80px;top:255.31px;" width="40.8" height="18.3"><text x="4" y="12.69" font-size="10.14" fill="#ffffff" stroke="#ffffff" stroke-width="0.3" font-weight="bold">Layer1</text></svg>
<svg class="a" style="left:993.3px;top:259.2px;" width="11" height="11" viewBox="0 0 11 11"><g fill="#fff"><circle cx="5.5" cy="5.5" r="3.6"/><g transform="translate(5.5 5.5)"><rect x="-1.1" y="-5.3" width="2.2" height="10.6"/><rect x="-1.1" y="-5.3" width="2.2" height="10.6" transform="rotate(45)"/><rect x="-1.1" y="-5.3" width="2.2" height="10.6" transform="rotate(90)"/><rect x="-1.1" y="-5.3" width="2.2" height="10.6" transform="rotate(135)"/></g></g><circle cx="5.5" cy="5.5" r="1.4" fill="#4f97d6"/></svg>
<div class="a" style="left:1008.5px;top:242px;width:14px;height:37px;background:#262626"></div>
<svg class="a" style="left:1012.2px;top:243.5px;" width="7" height="5" viewBox="0 0 7 5"><path d="M0 5 L3.5 0 L7 5Z" fill="#b0b0b0"/></svg>
<div class="a" style="left:1009.5px;top:258.5px;width:12.5px;height:12.5px;background:#5e5e5e;border:1px solid #4a4a4a;border-radius:4px;"></div>
<svg class="a" style="left:1012.2px;top:273px;" width="7" height="5" viewBox="0 0 7 5"><path d="M0 0 L7 0 L3.5 5Z" fill="#b0b0b0"/></svg>
<div class="a" style="left:762.5px;top:282.4px;width:16.7px;height:17px;background:#3e3e3e;border:1px solid #4b4b4b;border-radius:3px;"></div>
<svg class="a" style="left:762.5px;top:282.4px;" width="16.7" height="17" viewBox="0 0 16.7 17"><path d="M5 3.5 L10 3.5 L12.5 6 L12.5 13.5 L5 13.5Z" fill="none" stroke="#dedede" stroke-width="1"/></svg>
<div class="a" style="left:782.6px;top:282.4px;width:16.9px;height:17px;background:#3e3e3e;border:1px solid #4b4b4b;border-radius:3px;"></div>
<svg class="a" style="left:782.6px;top:282.4px;" width="16.9" height="17" viewBox="0 0 16.9 17"><path d="M5 3.5 L10 3.5 L12.5 6 L12.5 13.5 L5 13.5Z" fill="none" stroke="#dedede" stroke-width="1"/><rect x="6.8" y="7.5" width="3.8" height="4" fill="none" stroke="#dedede" stroke-width="0.8"/></svg>
<div class="a" style="left:802.9px;top:282.4px;width:16.9px;height:17px;background:#3e3e3e;border:1px solid #4b4b4b;border-radius:3px;"></div>
<svg class="a" style="left:802.9px;top:282.4px;" width="16.9" height="17" viewBox="0 0 16.9 17"><path d="M5 3.5 L10 3.5 L12.5 6 L12.5 13.5 L5 13.5Z" fill="none" stroke="#dedede" stroke-width="1"/><path d="M8.8 7 V11.5 M7.6 8 L8.8 7" stroke="#dedede" stroke-width="0.9"/></svg>
<div class="a" style="left:822.9px;top:282.4px;width:22.1px;height:17px;background:#3e3e3e;border:1px solid #4b4b4b;border-radius:3px;"></div>
<svg class="a" style="left:822.9px;top:282.4px;" width="22.1" height="17" viewBox="0 0 22.1 17"><path d="M4 3.5 L8.5 3.5 L11 6 L11 13.5 L4 13.5Z" fill="none" stroke="#dedede" stroke-width="1"/><path d="M7 11 H11 M9 9 V13" stroke="#dedede" stroke-width="1.2"/><path d="M15 8 L19 8 L17 10.3Z" fill="#dedede"/></svg>
<div class="a" style="left:848.4px;top:282.4px;width:17.5px;height:17px;background:#3e3e3e;border:1px solid #4b4b4b;border-radius:3px;"></div>
<svg class="a" style="left:848.4px;top:282.4px;" width="17.5" height="17" viewBox="0 0 17.5 17"><path d="M3.5 5 L7.5 5 L8.5 6.5 L14 6.5 L14 13 L3.5 13Z" fill="#e4e4e4"/></svg>
<div class="a" style="left:874.5px;top:282.4px;width:16px;height:17px;background:#3e3e3e;border:1px solid #4b4b4b;border-radius:3px;"></div>
<svg class="a" style="left:874.5px;top:282.4px;" width="16" height="17" viewBox="0 0 16 17"><rect x="3" y="6" width="7" height="7.5" fill="none" stroke="#dedede" stroke-width="1"/><path d="M5.5 6 V3.5 H12.5 V11 H10" fill="none" stroke="#dedede" stroke-width="1"/></svg>
<div class="a" style="left:894.4px;top:282.4px;width:16.9px;height:17px;background:#2c2c2c;border:1px solid #0e0e0e;border-radius:3px;"></div>
<svg class="a" style="left:894.4px;top:282.4px;" width="16.9" height="17" viewBox="0 0 16.9 17"><rect x="3" y="3" width="4" height="4" fill="none" stroke="#dedede" stroke-width="0.9"/><rect x="3" y="9" width="4" height="4" fill="none" stroke="#dedede" stroke-width="0.9"/><rect x="10" y="6" width="4.5" height="4" fill="#dedede"/><path d="M7 8 H10" stroke="#dedede"/></svg>
<div class="a" style="left:920px;top:282.4px;width:16px;height:17px;background:#3e3e3e;border:1px solid #4b4b4b;border-radius:3px;"></div>
<svg class="a" style="left:920px;top:282.4px;" width="16" height="17" viewBox="0 0 16 17"><rect x="4.5" y="5.5" width="7" height="8.5" fill="none" stroke="#dedede" stroke-width="1"/><path d="M3.5 5 H12.5 M6.5 5 V3.5 H9.5 V5 M6.5 7 V12.5 M8 7 V12.5 M9.5 7 V12.5" stroke="#dedede" stroke-width="0.8" fill="none"/></svg>
<div class="a" style="left:869.3px;top:286.5px;width:1px;height:8px;background:#444"></div>
<div class="a" style="left:915.2px;top:286.5px;width:1px;height:8px;background:#444"></div>
<div class="a" style="left:757px;top:304.5px;width:267px;height:4px;background:#1c1c1c"></div>
<div class="a" style="left:757px;top:308.3px;width:267px;height:15.5px;background:linear-gradient(#253240 0px,#253240 1.5px,#3c3434 4.5px,#363232 100%)"></div>
<div class="a" style="left:757px;top:308.3px;width:267px;height:1px;background:#78a8c8"></div>
<svg class="a" style="left:857.60px;top:308.92px;" width="44.4" height="15.0"><text x="4" y="11.08" font-size="8.33" fill="#c8c8c8" stroke="#c8c8c8" stroke-width="0.05" textLength="36.40" lengthAdjust="spacingAndGlyphs">Brush Size</text></svg>
<svg class="a" style="left:1002.5px;top:312.3px;" width="8" height="7" viewBox="0 0 8 7"><path d="M4.5 1.5 L0.5 1.5 L0.5 6.5 L6.5 6.5 L6.5 3.5" fill="none" stroke="#c8c8c8" stroke-width="1"/><path d="M3.5 3.5 L7 0" stroke="#c8c8c8" stroke-width="1"/></svg>
<svg class="a" style="left:1014.5px;top:312.6px;" width="7" height="6.7" viewBox="0 0 7 6.7"><path d="M0.9 0.9 L6.1 5.8 M6.1 0.9 L0.9 5.8" stroke="#dcdcdc" stroke-width="1.7"/></svg>
<div class="a" style="left:757px;top:323.2px;width:267px;height:222.8px;background:#4a4848"></div>
<div class="a" style="left:757px;top:323.2px;width:1px;height:222.8px;background:#2a2a2a"></div>
<div class="a" style="left:757.9px;top:324.8px;width:239px;height:111.5px;background:#474747"></div>
<div class="a" style="left:757.9px;top:324.8px;width:30px;height:37px;background:#585858"></div>
<div class="a" style="left:788.9px;top:324.8px;width:29px;height:37px;background:#585858"></div>
<div class="a" style="left:818.9px;top:324.8px;width:29px;height:37px;background:#585858"></div>
<div class="a" style="left:848.9px;top:324.8px;width:29px;height:37px;background:#585858"></div>
<div class="a" style="left:878.9px;top:324.8px;width:29px;height:37px;background:#585858"></div>
<div class="a" style="left:908.9px;top:324.8px;width:29px;height:37px;background:#585858"></div>
<div class="a" style="left:938.9px;top:324.8px;width:29px;height:37px;background:#585858"></div>
<div class="a" style="left:968.9px;top:324.8px;width:29px;height:37px;background:#585858"></div>
<div class="a" style="left:757.9px;top:362.6px;width:30px;height:36px;background:#585858"></div>
<div class="a" style="left:788.9px;top:362.6px;width:29px;height:36px;background:#585858"></div>
<div class="a" style="left:818.9px;top:362.6px;width:29px;height:36px;background:#585858"></div>
<div class="a" style="left:848.9px;top:362.6px;width:29px;height:36px;background:#585858"></div>
<div class="a" style="left:878.9px;top:362.6px;width:29px;height:36px;background:#585858"></div>
<div class="a" style="left:908.9px;top:362.6px;width:29px;height:36px;background:#585858"></div>
<div class="a" style="left:938.9px;top:362.6px;width:29px;height:36px;background:#585858"></div>
<div class="a" style="left:968.9px;top:362.6px;width:29px;height:36px;background:#585858"></div>
<div class="a" style="left:757.9px;top:399.6px;width:30px;height:36px;background:#585858"></div>
<div class="a" style="left:788.9px;top:399.6px;width:29px;height:36px;background:#585858"></div>
<div class="a" style="left:818.9px;top:399.6px;width:29px;height:36px;background:#585858"></div>
<div class="a" style="left:848.9px;top:399.6px;width:29px;height:36px;background:#585858"></div>
<div class="a" style="left:878.9px;top:399.6px;width:29px;height:36px;background:#585858"></div>
<div class="a" style="left:908.9px;top:399.6px;width:29px;height:36px;background:#585858"></div>
<div class="a" style="left:938.9px;top:399.6px;width:29px;height:36px;background:#585858"></div>
<div class="a" style="left:968.9px;top:399.6px;width:29px;height:36px;background:#585858"></div>
<svg class="a" style="left:757px;top:324px;" width="250" height="120" viewBox="0 0 250 120"><circle cx="45.60" cy="15.00" r="0.75" fill="#8a8a8a"/><circle cx="75.60" cy="15.00" r="0.90" fill="#8a8a8a"/><circle cx="105.60" cy="15.00" r="1.25" fill="#f2f2f2"/><circle cx="135.60" cy="15.00" r="1.65" fill="#f2f2f2"/><circle cx="165.60" cy="15.00" r="1.90" fill="#f2f2f2"/><circle cx="195.60" cy="15.00" r="2.75" fill="#f2f2f2"/><circle cx="225.60" cy="15.00" r="3.90" fill="#f2f2f2"/><circle cx="15.60" cy="52.30" r="4.50" fill="#f2f2f2"/><circle cx="45.60" cy="52.30" r="5.50" fill="#f2f2f2"/><circle cx="75.60" cy="52.30" r="7.25" fill="#f2f2f2"/><circle cx="105.60" cy="52.30" r="8.75" fill="#f2f2f2"/><circle cx="135.60" cy="52.30" r="8.75" fill="#f2f2f2"/><circle cx="165.60" cy="52.30" r="8.75" fill="#f2f2f2"/><circle cx="195.60" cy="52.30" r="8.75" fill="#f2f2f2"/><circle cx="225.60" cy="52.30" r="8.75" fill="#f2f2f2"/><circle cx="15.60" cy="89.70" r="8.75" fill="#f2f2f2"/><circle cx="45.60" cy="89.70" r="8.75" fill="#f2f2f2"/><circle cx="75.60" cy="89.70" r="8.75" fill="#f2f2f2"/><circle cx="105.60" cy="89.70" r="8.75" fill="#f2f2f2"/><circle cx="135.60" cy="89.70" r="8.75" fill="#f2f2f2"/><circle cx="165.60" cy="89.70" r="8.75" fill="#f2f2f2"/><circle cx="195.60" cy="89.70" r="8.75" fill="#f2f2f2"/><circle cx="225.60" cy="89.70" r="8.75" fill="#f2f2f2"/></svg>
<svg class="a" style="left:766.40px;top:349.44px;" width="11.8" height="13.0"><text x="4" y="9.56" font-size="7.20" fill="#ececec" stroke="#ececec" stroke-width="0.1" textLength="3.80" lengthAdjust="spacingAndGlyphs">1</text></svg>
<svg class="a" style="left:793.55px;top:349.44px;" width="17.5" height="13.0"><text x="4" y="9.56" font-size="7.20" fill="#ececec" stroke="#ececec" stroke-width="0.1" textLength="9.51" lengthAdjust="spacingAndGlyphs">1.5</text></svg>
<svg class="a" style="left:826.40px;top:349.44px;" width="11.8" height="13.0"><text x="4" y="9.56" font-size="7.20" fill="#ececec" stroke="#ececec" stroke-width="0.1" textLength="3.80" lengthAdjust="spacingAndGlyphs">2</text></svg>
<svg class="a" style="left:856.40px;top:349.44px;" width="11.8" height="13.0"><text x="4" y="9.56" font-size="7.20" fill="#ececec" stroke="#ececec" stroke-width="0.1" textLength="3.80" lengthAdjust="spacingAndGlyphs">3</text></svg>
<svg class="a" style="left:886.40px;top:349.44px;" width="11.8" height="13.0"><text x="4" y="9.56" font-size="7.20" fill="#ececec" stroke="#ececec" stroke-width="0.1" textLength="3.80" lengthAdjust="spacingAndGlyphs">4</text></svg>
<svg class="a" style="left:916.40px;top:349.44px;" width="11.8" height="13.0"><text x="4" y="9.56" font-size="7.20" fill="#ececec" stroke="#ececec" stroke-width="0.1" textLength="3.80" lengthAdjust="spacingAndGlyphs">5</text></svg>
<svg class="a" style="left:946.40px;top:349.44px;" width="11.8" height="13.0"><text x="4" y="9.56" font-size="7.20" fill="#ececec" stroke="#ececec" stroke-width="0.1" textLength="3.80" lengthAdjust="spacingAndGlyphs">7</text></svg>
<svg class="a" style="left:974.50px;top:349.44px;" width="15.6" height="13.0"><text x="4" y="9.56" font-size="7.20" fill="#ececec" stroke="#ececec" stroke-width="0.1" textLength="7.61" lengthAdjust="spacingAndGlyphs">10</text></svg>
<svg class="a" style="left:764.50px;top:386.64px;" width="15.6" height="13.0"><text x="4" y="9.36" font-size="7.20" fill="#ececec" stroke="#ececec" stroke-width="0.1" textLength="7.61" lengthAdjust="spacingAndGlyphs">12</text></svg>
<svg class="a" style="left:794.50px;top:386.64px;" width="15.6" height="13.0"><text x="4" y="9.36" font-size="7.20" fill="#ececec" stroke="#ececec" stroke-width="0.1" textLength="7.61" lengthAdjust="spacingAndGlyphs">15</text></svg>
<svg class="a" style="left:824.50px;top:386.64px;" width="15.6" height="13.0"><text x="4" y="9.36" font-size="7.20" fill="#ececec" stroke="#ececec" stroke-width="0.1" textLength="7.61" lengthAdjust="spacingAndGlyphs">20</text></svg>
<svg class="a" style="left:854.50px;top:386.64px;" width="15.6" height="13.0"><text x="4" y="9.36" font-size="7.20" fill="#ececec" stroke="#ececec" stroke-width="0.1" textLength="7.61" lengthAdjust="spacingAndGlyphs">25</text></svg>
<svg class="a" style="left:884.50px;top:386.64px;" width="15.6" height="13.0"><text x="4" y="9.36" font-size="7.20" fill="#ececec" stroke="#ececec" stroke-width="0.1" textLength="7.61" lengthAdjust="spacingAndGlyphs">30</text></svg>
<svg class="a" style="left:914.50px;top:386.64px;" width="15.6" height="13.0"><text x="4" y="9.36" font-size="7.20" fill="#ececec" stroke="#ececec" stroke-width="0.1" textLength="7.61" lengthAdjust="spacingAndGlyphs">40</text></svg>
<svg class="a" style="left:944.50px;top:386.64px;" width="15.6" height="13.0"><text x="4" y="9.36" font-size="7.20" fill="#ececec" stroke="#ececec" stroke-width="0.1" textLength="7.61" lengthAdjust="spacingAndGlyphs">50</text></svg>
<svg class="a" style="left:974.50px;top:386.64px;" width="15.6" height="13.0"><text x="4" y="9.36" font-size="7.20" fill="#ececec" stroke="#ececec" stroke-width="0.1" textLength="7.61" lengthAdjust="spacingAndGlyphs">70</text></svg>
<svg class="a" style="left:762.60px;top:424.24px;" width="19.4" height="13.0"><text x="4" y="9.76" font-size="7.20" fill="#ececec" stroke="#ececec" stroke-width="0.1" textLength="11.41" lengthAdjust="spacingAndGlyphs">100</text></svg>
<svg class="a" style="left:792.60px;top:424.24px;" width="19.4" height="13.0"><text x="4" y="9.76" font-size="7.20" fill="#ececec" stroke="#ececec" stroke-width="0.1" textLength="11.41" lengthAdjust="spacingAndGlyphs">150</text></svg>
<svg class="a" style="left:822.60px;top:424.24px;" width="19.4" height="13.0"><text x="4" y="9.76" font-size="7.20" fill="#ececec" stroke="#ececec" stroke-width="0.1" textLength="11.41" lengthAdjust="spacingAndGlyphs">200</text></svg>
<svg class="a" style="left:852.60px;top:424.24px;" width="19.4" height="13.0"><text x="4" y="9.76" font-size="7.20" fill="#ececec" stroke="#ececec" stroke-width="0.1" textLength="11.41" lengthAdjust="spacingAndGlyphs">300</text></svg>
<svg class="a" style="left:882.60px;top:424.24px;" width="19.4" height="13.0"><text x="4" y="9.76" font-size="7.20" fill="#ececec" stroke="#ececec" stroke-width="0.1" textLength="11.41" lengthAdjust="spacingAndGlyphs">400</text></svg>
<svg class="a" style="left:912.60px;top:424.24px;" width="19.4" height="13.0"><text x="4" y="9.76" font-size="7.20" fill="#ececec" stroke="#ececec" stroke-width="0.1" textLength="11.41" lengthAdjust="spacingAndGlyphs">500</text></svg>
<svg class="a" style="left:942.60px;top:424.24px;" width="19.4" height="13.0"><text x="4" y="9.76" font-size="7.20" fill="#ececec" stroke="#ececec" stroke-width="0.1" textLength="11.41" lengthAdjust="spacingAndGlyphs">700</text></svg>
<svg class="a" style="left:970.69px;top:424.24px;" width="23.2" height="13.0"><text x="4" y="9.76" font-size="7.20" fill="#ececec" stroke="#ececec" stroke-width="0.1" textLength="15.22" lengthAdjust="spacingAndGlyphs">1000</text></svg>
<div class="a" style="left:1009.9px;top:323.2px;width:14.1px;height:222.8px;background:#2a2a2a"></div>
<div class="a" style="left:1009.9px;top:324px;width:14.1px;height:8.1px;background:#1e1e1e"></div>
<svg class="a" style="left:1013.5px;top:325.5px;" width="7" height="5" viewBox="0 0 7 5"><path d="M0 5 L3.5 0 L7 5Z" fill="#d0d0d0"/></svg>
<div class="a" style="left:1010.5px;top:332.1px;width:13px;height:203.6px;background:#6e6e6e;border:1px solid #5e5e5e;border-radius:6px;"></div>
<svg class="a" style="left:1013.5px;top:537.2px;" width="7" height="5" viewBox="0 0 7 5"><path d="M0 0 L7 0 L3.5 5Z" fill="#d0d0d0"/></svg>
<div class="a" style="left:0px;top:545.5px;width:1024px;height:29.5px;background:#e2dee9"></div>
<div class="a" style="left:0px;top:545.5px;width:37px;height:29.5px;background:#e4e0eb"></div>
<div class="a" style="left:37px;top:545.5px;width:256px;height:29.5px;background:#fefefe"></div>
<div class="a" style="left:37px;top:545.5px;width:256px;height:0.8px;background:#d8d8d8"></div>
<svg class="a" style="left:12px;top:554px;" width="13.5" height="13.5" viewBox="0 0 13.5 13.5"><path d="M0 1.9 L6 1.05 L6 6.4 L0 6.4Z M6.8 0.95 L13.5 0 L13.5 6.4 L6.8 6.4Z M0 7.1 L6 7.1 L6 12.4 L0 11.6Z M6.8 7.1 L13.5 7.1 L13.5 13.5 L6.8 12.5Z" fill="#111"/></svg>
<svg class="a" style="left:45.2px;top:555.6px;" width="12" height="11" viewBox="0 0 12 11"><circle cx="7.8" cy="3.9" r="3.4" fill="none" stroke="#333" stroke-width="1.1"/><path d="M5.3 6.4 L0.5 10.8" stroke="#333" stroke-width="1.2"/></svg>
<svg class="a" style="left:62.70px;top:551.15px;" width="103.1" height="19.0"><text x="4" y="13.85" font-size="10.58" fill="#3c3c3c" stroke="#3c3c3c" stroke-width="0.15" textLength="95.06" lengthAdjust="spacingAndGlyphs">Type here to search</text></svg>
<svg class="a" style="left:305px;top:551px;" width="18" height="19" viewBox="0 0 18 19"><rect x="0" y="0.5" width="18" height="18" rx="3" fill="#f6f4f8"/><circle cx="9" cy="10" r="5.3" fill="#2cb4a4"/><path d="M9 4.7 C12 4.7,14.3 7,14.3 10 L9 10Z" fill="#3da23a"/><path d="M3.7 10 C3.7 7,6 4.7,9 4.7 L9 10Z" fill="#f24c3a"/><path d="M9 4.7 C8 3,9 1.8,10.5 2.5" fill="none" stroke="#e06030" stroke-width="0.8"/></svg>
<div class="a" style="left:299.75px;top:573.2px;width:28.75px;height:1.8px;background:#d070e6"></div>
<svg class="a" style="left:342px;top:551px;" width="22" height="22" viewBox="0 0 22 22"><circle cx="9.5" cy="9.5" r="8" fill="#dd4b39"/><path d="M9.5 9.5 L16.4 5.5 A8 8 0 0 1 13.5 16.4Z" fill="#f6c02e"/><path d="M9.5 9.5 L13.5 16.4 A8 8 0 0 1 2.6 5.5Z" fill="#2d9b4a"/><circle cx="9.5" cy="9.5" r="3.6" fill="#4a8bf5" stroke="#fff" stroke-width="1.2"/><circle cx="15.3" cy="15.3" r="5.8" fill="#174a8c"/><text x="15.3" y="17.8" font-size="7" fill="#fff" text-anchor="middle" font-family="Liberation Sans" font-weight="bold">H</text></svg>
<div class="a" style="left:336px;top:573.2px;width:29.5px;height:1.8px;background:#d070e6"></div>
<svg class="a" style="left:378px;top:551px;" width="20" height="20" viewBox="0 0 20 20"><path d="M10 1 C15 1,19 5,19 10 C19 15,15 19,10 19 C8 19,6 18.5,4 19 C4.5 17.5,4 16.5,3 15.5 C1.7 14,1 12,1 10 C1 5,5 1,10 1Z" fill="#fff" stroke="#2e6ee6" stroke-width="1.4"/><text x="10.3" y="12.3" font-size="6.3" fill="#2e6ee6" text-anchor="middle" font-family="Liberation Sans" font-weight="bold">Zalo</text></svg>
<svg class="a" style="left:416px;top:552.5px;" width="17" height="15" viewBox="0 0 17 15"><rect x="0" y="2.5" width="17" height="12" fill="#f5c542"/><rect x="0" y="0.5" width="7" height="3" fill="#e4a72e"/><path d="M4.5 8.5 H12.5 V14.5 H10.5 V11 H6.5 V14.5 H4.5Z" fill="#3a7cd4"/></svg>
<svg class="a" style="left:823px;top:557.5px;" width="10.5" height="6.5" viewBox="0 0 10.5 6.5"><path d="M0.7 6 L5.25 1.2 L9.8 6" fill="none" stroke="#222" stroke-width="1.2"/></svg>
<svg class="a" style="left:840.5px;top:557.5px;" width="13" height="9" viewBox="0 0 13 9"><rect x="0.5" y="1.5" width="10.5" height="6" fill="none" stroke="#222" stroke-width="1"/><rect x="1.5" y="2.5" width="5" height="4" fill="#222"/><rect x="11" y="3.3" width="1.4" height="2.4" fill="#222"/></svg>
<svg class="a" style="left:861px;top:553.5px;" width="12" height="14" viewBox="0 0 12 14"><rect x="1" y="3.5" width="6" height="7" rx="1" fill="none" stroke="#222" stroke-width="1"/><rect x="7" y="5.5" width="3.2" height="3" fill="none" stroke="#222" stroke-width="1"/><path d="M2.5 1.5 Q4 0.5 5.5 1.5 M2.5 12.5 Q4 13.5 5.5 12.5" stroke="#222" fill="none"/></svg>
<svg class="a" style="left:877.5px;top:556px;" width="13" height="10" viewBox="0 0 13 10"><path d="M0.5 3 L3 3 L6 0.5 L6 9.5 L3 7 L0.5 7Z" fill="none" stroke="#222" stroke-width="1"/><path d="M8.5 3.2 L11.8 6.8 M11.8 3.2 L8.5 6.8" stroke="#222" stroke-width="1"/></svg>
<svg class="a" style="left:897px;top:556px;" width="12" height="11" viewBox="0 0 12 11"><path d="M1 10.5 C1 5,5 1,10.5 1 M3.3 10.5 C3.3 6.5,6.5 3.3,10.5 3.3 M5.6 10.5 C5.6 8,8 5.6,10.5 5.6 M7.9 10.5 C7.9 9,9 7.9,10.5 7.9" fill="none" stroke="#222" stroke-width="0.9"/><circle cx="10" cy="10" r="1.1" fill="#222"/></svg>
<svg class="a" style="left:910.80px;top:552.15px;" width="24.4" height="15.8"><text x="4" y="11.85" font-size="8.77" fill="#222" stroke="#222" stroke-width="0.15" textLength="16.40" lengthAdjust="spacingAndGlyphs">ENG</text></svg>
<svg class="a" style="left:941.80px;top:545.41px;" width="38.5" height="15.9"><text x="4" y="11.59" font-size="8.84" fill="#222" stroke="#222" stroke-width="0.15" textLength="30.49" lengthAdjust="spacingAndGlyphs">5:57 PM</text></svg>
<svg class="a" style="left:937.80px;top:558.33px;" width="45.5" height="16.4"><text x="4" y="11.67" font-size="9.13" fill="#222" stroke="#222" stroke-width="0.15" textLength="37.49" lengthAdjust="spacingAndGlyphs">9/26/2021</text></svg>
<svg class="a" style="left:993px;top:554.5px;" width="20" height="18" viewBox="0 0 20 18"><path d="M1.5 1 L13 1 L13 9.5 L6.5 9.5 L4 12 L4 9.5 L1.5 9.5Z" fill="#1a1a1a"/><path d="M3.5 3.5 H11 M3.5 5.5 H11 M3.5 7.5 H8.5" stroke="#e2dee9" stroke-width="0.8"/><circle cx="12.3" cy="11" r="5" fill="#e2dee9" stroke="#444" stroke-width="1"/><text x="12.3" y="13.7" font-size="7.5" text-anchor="middle" fill="#222" font-family="Liberation Sans" font-weight="bold">1</text></svg>
<div class="a" style="left:1021px;top:546px;width:1px;height:29px;background:#c8c4d0"></div></body></html>
